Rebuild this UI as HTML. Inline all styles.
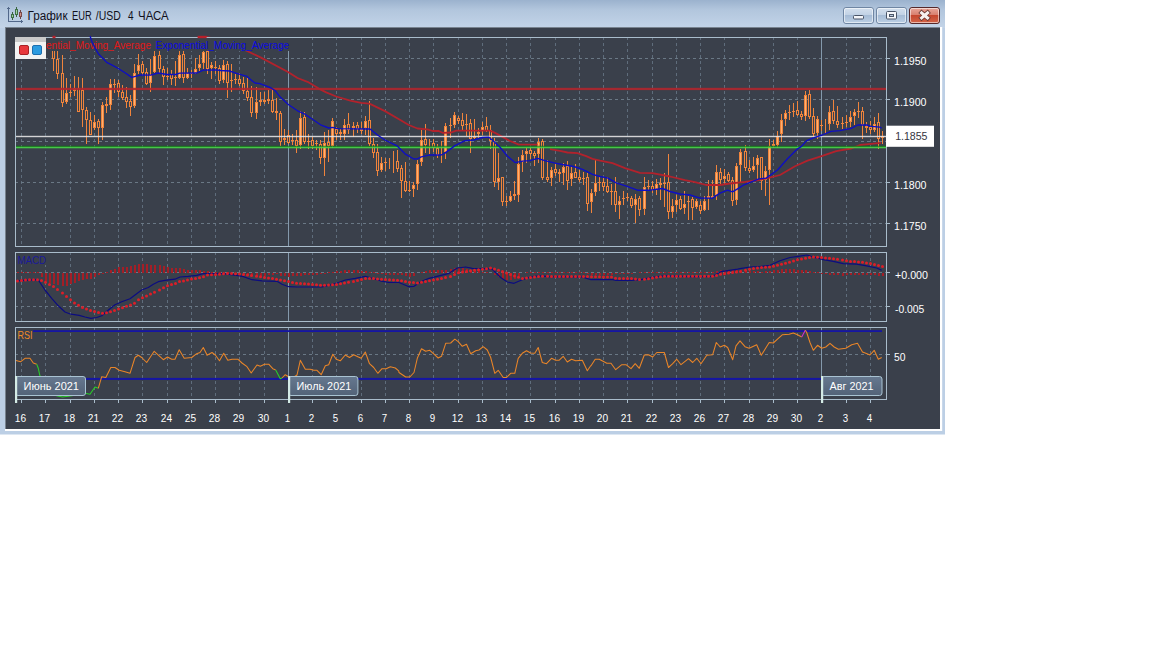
<!DOCTYPE html>
<html><head><meta charset="utf-8"><title>График EUR /USD 4 ЧАСА</title>
<style>html,body{margin:0;padding:0;background:#fff;width:1152px;height:648px;overflow:hidden}</style></head>
<body>
<svg width="1152" height="648" viewBox="0 0 1152 648" style="position:absolute;left:0;top:0;font-family:'Liberation Sans',sans-serif">
<defs>
<linearGradient id="tb" x1="0" y1="0" x2="0" y2="1"><stop offset="0" stop-color="#9bb2ce"/><stop offset="0.35" stop-color="#b2c6dd"/><stop offset="1" stop-color="#c3d4e8"/></linearGradient>
<linearGradient id="btn" x1="0" y1="0" x2="0" y2="1"><stop offset="0" stop-color="#d5e1ef"/><stop offset="0.45" stop-color="#c2d2e5"/><stop offset="0.5" stop-color="#a6bcd6"/><stop offset="1" stop-color="#bed1e6"/></linearGradient>
<linearGradient id="cls" x1="0" y1="0" x2="0" y2="1"><stop offset="0" stop-color="#e9a99d"/><stop offset="0.45" stop-color="#d9806f"/><stop offset="0.5" stop-color="#c5472f"/><stop offset="1" stop-color="#d4674a"/></linearGradient>
<linearGradient id="lab" x1="0" y1="0" x2="0" y2="1"><stop offset="0" stop-color="#66788f"/><stop offset="1" stop-color="#536378"/></linearGradient>
</defs>
<rect x="0" y="0" width="1152" height="648" fill="#ffffff"/>
<rect x="0" y="0" width="945" height="434.5" fill="#bccfe5"/>
<rect x="0" y="0" width="945" height="28" fill="url(#tb)"/>
<rect x="5" y="27" width="937.2" height="404" fill="#ffffff"/>
<rect x="5" y="27" width="935" height="402" fill="#78838f"/>
<rect x="6" y="28" width="934" height="401" fill="#3a404b"/>
<g shape-rendering="crispEdges" fill="#52688a"><rect x="8" y="7" width="1" height="15"/><rect x="8" y="21" width="15" height="1"/><rect x="7" y="8" width="3" height="1"/><rect x="21" y="20" width="1" height="3"/></g>
<g shape-rendering="crispEdges"><rect x="12" y="12" width="1" height="8" fill="#3a6540"/><rect x="11" y="14" width="3" height="4" fill="#3f7046"/><rect x="12" y="15" width="1" height="2" fill="#9fd0a0"/><rect x="16" y="7" width="1" height="10" fill="#3a6540"/><rect x="15" y="9" width="3" height="6" fill="#3f7046"/><rect x="16" y="10" width="1" height="4" fill="#9fd0a0"/><rect x="20" y="10" width="1" height="9" fill="#6a4444"/><rect x="19" y="12" width="3" height="5" fill="#7a4c4a"/><rect x="20" y="13" width="1" height="3" fill="#d09088"/></g>
<text x="27.5" y="19.7" font-size="12" fill="#10101c" text-anchor="start" textLength="40" lengthAdjust="spacingAndGlyphs" >График</text>
<text x="72" y="19.7" font-size="12" fill="#10101c" text-anchor="start" textLength="19.7" lengthAdjust="spacingAndGlyphs" >EUR</text>
<text x="95.8" y="19.7" font-size="12" fill="#10101c" text-anchor="start" textLength="25" lengthAdjust="spacingAndGlyphs" >/USD</text>
<text x="128" y="19.7" font-size="12" fill="#10101c" text-anchor="start" textLength="5.6" lengthAdjust="spacingAndGlyphs" >4</text>
<text x="138" y="19.7" font-size="12" fill="#10101c" text-anchor="start" textLength="30.7" lengthAdjust="spacingAndGlyphs" >ЧАСА</text>
<rect x="843.5" y="7.5" width="30" height="16" rx="2.5" fill="url(#btn)" stroke="#6f86a3" stroke-width="1"/><rect x="844.5" y="8.5" width="28" height="14" rx="1.5" fill="none" stroke="#ffffff" stroke-opacity="0.55" stroke-width="1"/>
<rect x="876.5" y="7.5" width="30" height="16" rx="2.5" fill="url(#btn)" stroke="#6f86a3" stroke-width="1"/><rect x="877.5" y="8.5" width="28" height="14" rx="1.5" fill="none" stroke="#ffffff" stroke-opacity="0.55" stroke-width="1"/>
<rect x="909.5" y="7.5" width="30" height="16" rx="2.5" fill="url(#cls)" stroke="#55282a" stroke-width="1"/><rect x="910.5" y="8.5" width="28" height="14" rx="1.5" fill="none" stroke="#ffffff" stroke-opacity="0.55" stroke-width="1"/>
<rect x="853.5" y="15.5" width="10" height="3.5" rx="1" fill="#f4f6fa" stroke="#4a5568" stroke-width="1"/>
<rect x="886.5" y="11.5" width="10" height="7.5" rx="1" fill="#f4f6fa" stroke="#4a5568" stroke-width="1"/><rect x="889.5" y="14.5" width="4" height="2" fill="#b9c8da" stroke="#4a5568" stroke-width="1"/>
<path d="M921.6 12.8 L927.6 18 M927.6 12.8 L921.6 18" stroke="#6a3a34" stroke-width="4.6" stroke-linecap="square" fill="none"/><path d="M921.6 12.8 L927.6 18 M927.6 12.8 L921.6 18" stroke="#f7f2f0" stroke-width="3" stroke-linecap="square" fill="none"/>
<g stroke="#5f6d7c" stroke-width="1" stroke-dasharray="3 3" shape-rendering="crispEdges" fill="none">
<path d="M21.5 37 V246"/>
<path d="M45.5 37 V246"/>
<path d="M70.5 37 V246"/>
<path d="M94.5 37 V246"/>
<path d="M118.5 37 V246"/>
<path d="M142.5 37 V246"/>
<path d="M167.5 37 V246"/>
<path d="M191.5 37 V246"/>
<path d="M215.5 37 V246"/>
<path d="M239.5 37 V246"/>
<path d="M264.5 37 V246"/>
<path d="M312.5 37 V246"/>
<path d="M336.5 37 V246"/>
<path d="M361.5 37 V246"/>
<path d="M385.5 37 V246"/>
<path d="M409.5 37 V246"/>
<path d="M433.5 37 V246"/>
<path d="M458.5 37 V246"/>
<path d="M482.5 37 V246"/>
<path d="M506.5 37 V246"/>
<path d="M530.5 37 V246"/>
<path d="M555.5 37 V246"/>
<path d="M579.5 37 V246"/>
<path d="M603.5 37 V246"/>
<path d="M627.5 37 V246"/>
<path d="M652.5 37 V246"/>
<path d="M676.5 37 V246"/>
<path d="M700.5 37 V246"/>
<path d="M724.5 37 V246"/>
<path d="M749.5 37 V246"/>
<path d="M773.5 37 V246"/>
<path d="M797.5 37 V246"/>
<path d="M846.5 37 V246"/>
<path d="M870.5 37 V246"/>
<path d="M21.5 252 V321"/>
<path d="M45.5 252 V321"/>
<path d="M70.5 252 V321"/>
<path d="M94.5 252 V321"/>
<path d="M118.5 252 V321"/>
<path d="M142.5 252 V321"/>
<path d="M167.5 252 V321"/>
<path d="M191.5 252 V321"/>
<path d="M215.5 252 V321"/>
<path d="M239.5 252 V321"/>
<path d="M264.5 252 V321"/>
<path d="M312.5 252 V321"/>
<path d="M336.5 252 V321"/>
<path d="M361.5 252 V321"/>
<path d="M385.5 252 V321"/>
<path d="M409.5 252 V321"/>
<path d="M433.5 252 V321"/>
<path d="M458.5 252 V321"/>
<path d="M482.5 252 V321"/>
<path d="M506.5 252 V321"/>
<path d="M530.5 252 V321"/>
<path d="M555.5 252 V321"/>
<path d="M579.5 252 V321"/>
<path d="M603.5 252 V321"/>
<path d="M627.5 252 V321"/>
<path d="M652.5 252 V321"/>
<path d="M676.5 252 V321"/>
<path d="M700.5 252 V321"/>
<path d="M724.5 252 V321"/>
<path d="M749.5 252 V321"/>
<path d="M773.5 252 V321"/>
<path d="M797.5 252 V321"/>
<path d="M846.5 252 V321"/>
<path d="M870.5 252 V321"/>
<path d="M21.5 327 V399"/>
<path d="M45.5 327 V399"/>
<path d="M70.5 327 V399"/>
<path d="M94.5 327 V399"/>
<path d="M118.5 327 V399"/>
<path d="M142.5 327 V399"/>
<path d="M167.5 327 V399"/>
<path d="M191.5 327 V399"/>
<path d="M215.5 327 V399"/>
<path d="M239.5 327 V399"/>
<path d="M264.5 327 V399"/>
<path d="M312.5 327 V399"/>
<path d="M336.5 327 V399"/>
<path d="M361.5 327 V399"/>
<path d="M385.5 327 V399"/>
<path d="M409.5 327 V399"/>
<path d="M433.5 327 V399"/>
<path d="M458.5 327 V399"/>
<path d="M482.5 327 V399"/>
<path d="M506.5 327 V399"/>
<path d="M530.5 327 V399"/>
<path d="M555.5 327 V399"/>
<path d="M579.5 327 V399"/>
<path d="M603.5 327 V399"/>
<path d="M627.5 327 V399"/>
<path d="M652.5 327 V399"/>
<path d="M676.5 327 V399"/>
<path d="M700.5 327 V399"/>
<path d="M724.5 327 V399"/>
<path d="M749.5 327 V399"/>
<path d="M773.5 327 V399"/>
<path d="M797.5 327 V399"/>
<path d="M846.5 327 V399"/>
<path d="M870.5 327 V399"/>
<path stroke="#6a7885" d="M15 58.5 H886"/>
<path stroke="#6a7885" d="M15 99.5 H886"/>
<path stroke="#6a7885" d="M15 141.5 H886"/>
<path stroke="#6a7885" d="M15 182.5 H886"/>
<path stroke="#6a7885" d="M15 223.5 H886"/>
<path stroke="#6a7885" d="M15 272.5 H886"/>
<path stroke="#6a7885" d="M15 306.5 H886"/>
<path stroke="#6a7885" d="M15 354.5 H886"/>
</g>
<g stroke="#8499ac" stroke-width="1" shape-rendering="crispEdges">
<path d="M288.5 37 V246"/>
<path d="M288.5 252 V321"/>
<path d="M288.5 327 V399"/>
<path d="M821.5 37 V246"/>
<path d="M821.5 252 V321"/>
<path d="M821.5 327 V399"/>
</g>
<g shape-rendering="crispEdges">
<rect x="53.0" y="45" width="1" height="26" fill="#f0843c"/>
<rect x="52.0" y="45" width="3" height="14" fill="#f0843c"/>
<rect x="53.0" y="46" width="1" height="12" fill="#3a404b"/>
<rect x="57.0" y="45" width="1" height="34" fill="#f0843c"/>
<rect x="56.0" y="59" width="3" height="15" fill="#f0843c"/>
<rect x="57.0" y="60" width="1" height="13" fill="#3a404b"/>
<rect x="62.0" y="55" width="1" height="52" fill="#f0843c"/>
<rect x="61.0" y="73" width="3" height="30" fill="#f0843c"/>
<rect x="62.0" y="74" width="1" height="28" fill="#3a404b"/>
<rect x="66.0" y="78" width="1" height="26" fill="#f0843c"/>
<rect x="65.0" y="93" width="3" height="9" fill="#f0843c"/>
<rect x="66.0" y="94" width="1" height="7" fill="#ffb070"/>
<rect x="70.0" y="84" width="1" height="13" fill="#f0843c"/>
<rect x="69.0" y="92" width="3" height="1" fill="#f0843c"/>
<rect x="74.0" y="76" width="1" height="20" fill="#f0843c"/>
<rect x="73.0" y="88" width="3" height="3" fill="#f0843c"/>
<rect x="74.0" y="89" width="1" height="1" fill="#ffb070"/>
<rect x="78.0" y="77" width="1" height="35" fill="#f0843c"/>
<rect x="77.0" y="88" width="3" height="24" fill="#f0843c"/>
<rect x="78.0" y="89" width="1" height="22" fill="#3a404b"/>
<rect x="82.0" y="78" width="1" height="49" fill="#f0843c"/>
<rect x="81.0" y="90" width="3" height="20" fill="#f0843c"/>
<rect x="82.0" y="91" width="1" height="18" fill="#3a404b"/>
<rect x="86.0" y="107" width="1" height="37" fill="#f0843c"/>
<rect x="85.0" y="110" width="3" height="10" fill="#f0843c"/>
<rect x="86.0" y="111" width="1" height="8" fill="#3a404b"/>
<rect x="90.0" y="112" width="1" height="23" fill="#f0843c"/>
<rect x="89.0" y="120" width="3" height="15" fill="#f0843c"/>
<rect x="90.0" y="121" width="1" height="13" fill="#3a404b"/>
<rect x="94.0" y="115" width="1" height="15" fill="#f0843c"/>
<rect x="93.0" y="122" width="3" height="6" fill="#f0843c"/>
<rect x="94.0" y="123" width="1" height="4" fill="#ffb070"/>
<rect x="98.0" y="119" width="1" height="25" fill="#f0843c"/>
<rect x="97.0" y="121" width="3" height="7" fill="#f0843c"/>
<rect x="98.0" y="122" width="1" height="5" fill="#3a404b"/>
<rect x="102.0" y="102" width="1" height="38" fill="#f0843c"/>
<rect x="101.0" y="105" width="3" height="23" fill="#f0843c"/>
<rect x="102.0" y="106" width="1" height="21" fill="#ffb070"/>
<rect x="106.0" y="97" width="1" height="16" fill="#f0843c"/>
<rect x="105.0" y="104" width="3" height="2" fill="#f0843c"/>
<rect x="110.0" y="79" width="1" height="31" fill="#f0843c"/>
<rect x="109.0" y="84" width="3" height="21" fill="#f0843c"/>
<rect x="110.0" y="85" width="1" height="19" fill="#ffb070"/>
<rect x="114.0" y="79" width="1" height="14" fill="#f0843c"/>
<rect x="113.0" y="84" width="3" height="1" fill="#f0843c"/>
<rect x="118.0" y="80" width="1" height="17" fill="#f0843c"/>
<rect x="117.0" y="83" width="3" height="9" fill="#f0843c"/>
<rect x="118.0" y="84" width="1" height="7" fill="#3a404b"/>
<rect x="122.0" y="85" width="1" height="15" fill="#f0843c"/>
<rect x="121.0" y="92" width="3" height="6" fill="#f0843c"/>
<rect x="122.0" y="93" width="1" height="4" fill="#3a404b"/>
<rect x="126.0" y="87" width="1" height="21" fill="#f0843c"/>
<rect x="125.0" y="97" width="3" height="5" fill="#f0843c"/>
<rect x="126.0" y="98" width="1" height="3" fill="#3a404b"/>
<rect x="130.0" y="95" width="1" height="21" fill="#f0843c"/>
<rect x="129.0" y="101" width="3" height="6" fill="#f0843c"/>
<rect x="130.0" y="102" width="1" height="4" fill="#3a404b"/>
<rect x="134.0" y="64" width="1" height="44" fill="#f0843c"/>
<rect x="133.0" y="73" width="3" height="33" fill="#f0843c"/>
<rect x="134.0" y="74" width="1" height="31" fill="#ffb070"/>
<rect x="138.0" y="54" width="1" height="20" fill="#f0843c"/>
<rect x="137.0" y="65" width="3" height="6" fill="#f0843c"/>
<rect x="138.0" y="66" width="1" height="4" fill="#ffb070"/>
<rect x="142.0" y="61" width="1" height="14" fill="#f0843c"/>
<rect x="141.0" y="64" width="3" height="9" fill="#f0843c"/>
<rect x="142.0" y="65" width="1" height="7" fill="#3a404b"/>
<rect x="146.0" y="68" width="1" height="17" fill="#f0843c"/>
<rect x="145.0" y="72" width="3" height="12" fill="#f0843c"/>
<rect x="146.0" y="73" width="1" height="10" fill="#3a404b"/>
<rect x="150.0" y="59" width="1" height="33" fill="#f0843c"/>
<rect x="149.0" y="75" width="3" height="8" fill="#f0843c"/>
<rect x="150.0" y="76" width="1" height="6" fill="#ffb070"/>
<rect x="154.0" y="45" width="1" height="28" fill="#f0843c"/>
<rect x="153.0" y="56" width="3" height="16" fill="#f0843c"/>
<rect x="154.0" y="57" width="1" height="14" fill="#ffb070"/>
<rect x="159.0" y="45" width="1" height="28" fill="#f0843c"/>
<rect x="158.0" y="55" width="3" height="14" fill="#f0843c"/>
<rect x="159.0" y="56" width="1" height="12" fill="#3a404b"/>
<rect x="163.0" y="66" width="1" height="19" fill="#f0843c"/>
<rect x="162.0" y="69" width="3" height="8" fill="#f0843c"/>
<rect x="163.0" y="70" width="1" height="6" fill="#3a404b"/>
<rect x="167.0" y="68" width="1" height="12" fill="#f0843c"/>
<rect x="166.0" y="76" width="3" height="1" fill="#f0843c"/>
<rect x="171.0" y="70" width="1" height="15" fill="#f0843c"/>
<rect x="170.0" y="74" width="3" height="5" fill="#f0843c"/>
<rect x="171.0" y="75" width="1" height="3" fill="#3a404b"/>
<rect x="175.0" y="61" width="1" height="25" fill="#f0843c"/>
<rect x="174.0" y="77" width="3" height="1" fill="#f0843c"/>
<rect x="179.0" y="45" width="1" height="34" fill="#f0843c"/>
<rect x="178.0" y="55" width="3" height="23" fill="#f0843c"/>
<rect x="179.0" y="56" width="1" height="21" fill="#ffb070"/>
<rect x="183.0" y="45" width="1" height="38" fill="#f0843c"/>
<rect x="182.0" y="54" width="3" height="24" fill="#f0843c"/>
<rect x="183.0" y="55" width="1" height="22" fill="#3a404b"/>
<rect x="187.0" y="68" width="1" height="11" fill="#f0843c"/>
<rect x="186.0" y="73" width="3" height="5" fill="#f0843c"/>
<rect x="187.0" y="74" width="1" height="3" fill="#ffb070"/>
<rect x="191.0" y="70" width="1" height="8" fill="#f0843c"/>
<rect x="190.0" y="73" width="3" height="1" fill="#f0843c"/>
<rect x="195.0" y="58" width="1" height="16" fill="#f0843c"/>
<rect x="194.0" y="69" width="3" height="4" fill="#f0843c"/>
<rect x="195.0" y="70" width="1" height="2" fill="#ffb070"/>
<rect x="199.0" y="55" width="1" height="16" fill="#f0843c"/>
<rect x="198.0" y="64" width="3" height="4" fill="#f0843c"/>
<rect x="199.0" y="65" width="1" height="2" fill="#ffb070"/>
<rect x="203.0" y="45" width="1" height="24" fill="#f0843c"/>
<rect x="202.0" y="52" width="3" height="11" fill="#f0843c"/>
<rect x="203.0" y="53" width="1" height="9" fill="#ffb070"/>
<rect x="207.0" y="45" width="1" height="29" fill="#f0843c"/>
<rect x="206.0" y="51" width="3" height="18" fill="#f0843c"/>
<rect x="207.0" y="52" width="1" height="16" fill="#3a404b"/>
<rect x="211.0" y="62" width="1" height="17" fill="#f0843c"/>
<rect x="210.0" y="65" width="3" height="3" fill="#f0843c"/>
<rect x="211.0" y="66" width="1" height="1" fill="#ffb070"/>
<rect x="215.0" y="61" width="1" height="13" fill="#f0843c"/>
<rect x="214.0" y="67" width="3" height="1" fill="#f0843c"/>
<rect x="219.0" y="65" width="1" height="19" fill="#f0843c"/>
<rect x="218.0" y="68" width="3" height="13" fill="#f0843c"/>
<rect x="219.0" y="69" width="1" height="11" fill="#3a404b"/>
<rect x="223.0" y="60" width="1" height="23" fill="#f0843c"/>
<rect x="222.0" y="65" width="3" height="15" fill="#f0843c"/>
<rect x="223.0" y="66" width="1" height="13" fill="#ffb070"/>
<rect x="227.0" y="61" width="1" height="37" fill="#f0843c"/>
<rect x="226.0" y="64" width="3" height="19" fill="#f0843c"/>
<rect x="227.0" y="65" width="1" height="17" fill="#3a404b"/>
<rect x="231.0" y="64" width="1" height="28" fill="#f0843c"/>
<rect x="230.0" y="80" width="3" height="1" fill="#f0843c"/>
<rect x="235.0" y="74" width="1" height="10" fill="#f0843c"/>
<rect x="234.0" y="79" width="3" height="1" fill="#f0843c"/>
<rect x="239.0" y="73" width="1" height="13" fill="#f0843c"/>
<rect x="238.0" y="79" width="3" height="5" fill="#f0843c"/>
<rect x="239.0" y="80" width="1" height="3" fill="#3a404b"/>
<rect x="243.0" y="77" width="1" height="17" fill="#f0843c"/>
<rect x="242.0" y="83" width="3" height="8" fill="#f0843c"/>
<rect x="243.0" y="84" width="1" height="6" fill="#3a404b"/>
<rect x="247.0" y="78" width="1" height="23" fill="#f0843c"/>
<rect x="246.0" y="91" width="3" height="7" fill="#f0843c"/>
<rect x="247.0" y="92" width="1" height="5" fill="#3a404b"/>
<rect x="251.0" y="86" width="1" height="31" fill="#f0843c"/>
<rect x="250.0" y="97" width="3" height="16" fill="#f0843c"/>
<rect x="251.0" y="98" width="1" height="14" fill="#3a404b"/>
<rect x="256.0" y="87" width="1" height="32" fill="#f0843c"/>
<rect x="255.0" y="102" width="3" height="11" fill="#f0843c"/>
<rect x="256.0" y="103" width="1" height="9" fill="#ffb070"/>
<rect x="260.0" y="92" width="1" height="14" fill="#f0843c"/>
<rect x="259.0" y="100" width="3" height="2" fill="#f0843c"/>
<rect x="264.0" y="92" width="1" height="12" fill="#f0843c"/>
<rect x="263.0" y="100" width="3" height="2" fill="#f0843c"/>
<rect x="268.0" y="90" width="1" height="14" fill="#f0843c"/>
<rect x="267.0" y="99" width="3" height="2" fill="#f0843c"/>
<rect x="272.0" y="90" width="1" height="23" fill="#f0843c"/>
<rect x="271.0" y="100" width="3" height="12" fill="#f0843c"/>
<rect x="272.0" y="101" width="1" height="10" fill="#3a404b"/>
<rect x="276.0" y="98" width="1" height="22" fill="#f0843c"/>
<rect x="275.0" y="111" width="3" height="2" fill="#f0843c"/>
<rect x="280.0" y="111" width="1" height="35" fill="#f0843c"/>
<rect x="279.0" y="113" width="3" height="29" fill="#f0843c"/>
<rect x="280.0" y="114" width="1" height="27" fill="#3a404b"/>
<rect x="284.0" y="129" width="1" height="16" fill="#f0843c"/>
<rect x="283.0" y="138" width="3" height="2" fill="#f0843c"/>
<rect x="288.0" y="130" width="1" height="14" fill="#f0843c"/>
<rect x="287.0" y="135" width="3" height="8" fill="#f0843c"/>
<rect x="288.0" y="136" width="1" height="6" fill="#3a404b"/>
<rect x="292.0" y="134" width="1" height="11" fill="#f0843c"/>
<rect x="291.0" y="140" width="3" height="1" fill="#f0843c"/>
<rect x="296.0" y="130" width="1" height="23" fill="#f0843c"/>
<rect x="295.0" y="140" width="3" height="6" fill="#f0843c"/>
<rect x="296.0" y="141" width="1" height="4" fill="#3a404b"/>
<rect x="300.0" y="111" width="1" height="38" fill="#f0843c"/>
<rect x="299.0" y="118" width="3" height="27" fill="#f0843c"/>
<rect x="300.0" y="119" width="1" height="25" fill="#ffb070"/>
<rect x="304.0" y="112" width="1" height="32" fill="#f0843c"/>
<rect x="303.0" y="117" width="3" height="25" fill="#f0843c"/>
<rect x="304.0" y="118" width="1" height="23" fill="#3a404b"/>
<rect x="308.0" y="134" width="1" height="15" fill="#f0843c"/>
<rect x="307.0" y="141" width="3" height="1" fill="#f0843c"/>
<rect x="312.0" y="137" width="1" height="12" fill="#f0843c"/>
<rect x="311.0" y="140" width="3" height="6" fill="#f0843c"/>
<rect x="312.0" y="141" width="1" height="4" fill="#3a404b"/>
<rect x="316.0" y="140" width="1" height="10" fill="#f0843c"/>
<rect x="315.0" y="143" width="3" height="1" fill="#f0843c"/>
<rect x="320.0" y="140" width="1" height="24" fill="#f0843c"/>
<rect x="319.0" y="144" width="3" height="14" fill="#f0843c"/>
<rect x="320.0" y="145" width="1" height="12" fill="#3a404b"/>
<rect x="324.0" y="132" width="1" height="44" fill="#f0843c"/>
<rect x="323.0" y="143" width="3" height="15" fill="#f0843c"/>
<rect x="324.0" y="144" width="1" height="13" fill="#ffb070"/>
<rect x="328.0" y="130" width="1" height="32" fill="#f0843c"/>
<rect x="327.0" y="142" width="3" height="4" fill="#f0843c"/>
<rect x="328.0" y="143" width="1" height="2" fill="#3a404b"/>
<rect x="332.0" y="118" width="1" height="30" fill="#f0843c"/>
<rect x="331.0" y="121" width="3" height="25" fill="#f0843c"/>
<rect x="332.0" y="122" width="1" height="23" fill="#ffb070"/>
<rect x="336.0" y="127" width="1" height="13" fill="#f0843c"/>
<rect x="335.0" y="129" width="3" height="5" fill="#f0843c"/>
<rect x="336.0" y="130" width="1" height="3" fill="#3a404b"/>
<rect x="340.0" y="129" width="1" height="11" fill="#f0843c"/>
<rect x="339.0" y="132" width="3" height="2" fill="#f0843c"/>
<rect x="344.0" y="119" width="1" height="21" fill="#f0843c"/>
<rect x="343.0" y="125" width="3" height="9" fill="#f0843c"/>
<rect x="344.0" y="126" width="1" height="7" fill="#ffb070"/>
<rect x="348.0" y="113" width="1" height="21" fill="#f0843c"/>
<rect x="347.0" y="124" width="3" height="6" fill="#f0843c"/>
<rect x="348.0" y="125" width="1" height="4" fill="#3a404b"/>
<rect x="353.0" y="122" width="1" height="15" fill="#f0843c"/>
<rect x="352.0" y="126" width="3" height="2" fill="#f0843c"/>
<rect x="357.0" y="122" width="1" height="11" fill="#f0843c"/>
<rect x="356.0" y="125" width="3" height="4" fill="#f0843c"/>
<rect x="357.0" y="126" width="1" height="2" fill="#3a404b"/>
<rect x="361.0" y="122" width="1" height="12" fill="#f0843c"/>
<rect x="360.0" y="129" width="3" height="2" fill="#f0843c"/>
<rect x="365.0" y="116" width="1" height="19" fill="#f0843c"/>
<rect x="364.0" y="121" width="3" height="7" fill="#f0843c"/>
<rect x="365.0" y="122" width="1" height="5" fill="#ffb070"/>
<rect x="369.0" y="101" width="1" height="45" fill="#f0843c"/>
<rect x="368.0" y="120" width="3" height="24" fill="#f0843c"/>
<rect x="369.0" y="121" width="1" height="22" fill="#3a404b"/>
<rect x="373.0" y="138" width="1" height="20" fill="#f0843c"/>
<rect x="372.0" y="144" width="3" height="9" fill="#f0843c"/>
<rect x="373.0" y="145" width="1" height="7" fill="#3a404b"/>
<rect x="377.0" y="144" width="1" height="32" fill="#f0843c"/>
<rect x="376.0" y="152" width="3" height="19" fill="#f0843c"/>
<rect x="377.0" y="153" width="1" height="17" fill="#3a404b"/>
<rect x="381.0" y="157" width="1" height="15" fill="#f0843c"/>
<rect x="380.0" y="163" width="3" height="7" fill="#f0843c"/>
<rect x="381.0" y="164" width="1" height="5" fill="#ffb070"/>
<rect x="385.0" y="158" width="1" height="13" fill="#f0843c"/>
<rect x="384.0" y="162" width="3" height="1" fill="#f0843c"/>
<rect x="389.0" y="158" width="1" height="11" fill="#f0843c"/>
<rect x="393.0" y="151" width="1" height="22" fill="#f0843c"/>
<rect x="397.0" y="150" width="1" height="22" fill="#f0843c"/>
<rect x="396.0" y="161" width="3" height="8" fill="#f0843c"/>
<rect x="397.0" y="162" width="1" height="6" fill="#3a404b"/>
<rect x="401.0" y="165" width="1" height="33" fill="#f0843c"/>
<rect x="400.0" y="168" width="3" height="13" fill="#f0843c"/>
<rect x="401.0" y="169" width="1" height="11" fill="#3a404b"/>
<rect x="405.0" y="162" width="1" height="30" fill="#f0843c"/>
<rect x="404.0" y="181" width="3" height="10" fill="#f0843c"/>
<rect x="405.0" y="182" width="1" height="8" fill="#3a404b"/>
<rect x="409.0" y="181" width="1" height="11" fill="#f0843c"/>
<rect x="408.0" y="190" width="3" height="1" fill="#f0843c"/>
<rect x="413.0" y="182" width="1" height="15" fill="#f0843c"/>
<rect x="412.0" y="185" width="3" height="4" fill="#f0843c"/>
<rect x="413.0" y="186" width="1" height="2" fill="#ffb070"/>
<rect x="417.0" y="160" width="1" height="30" fill="#f0843c"/>
<rect x="416.0" y="164" width="3" height="20" fill="#f0843c"/>
<rect x="417.0" y="165" width="1" height="18" fill="#ffb070"/>
<rect x="421.0" y="130" width="1" height="36" fill="#f0843c"/>
<rect x="420.0" y="140" width="3" height="22" fill="#f0843c"/>
<rect x="421.0" y="141" width="1" height="20" fill="#ffb070"/>
<rect x="425.0" y="124" width="1" height="29" fill="#f0843c"/>
<rect x="424.0" y="139" width="3" height="6" fill="#f0843c"/>
<rect x="425.0" y="140" width="1" height="4" fill="#3a404b"/>
<rect x="429.0" y="139" width="1" height="15" fill="#f0843c"/>
<rect x="433.0" y="139" width="1" height="13" fill="#f0843c"/>
<rect x="432.0" y="143" width="3" height="5" fill="#f0843c"/>
<rect x="433.0" y="144" width="1" height="3" fill="#3a404b"/>
<rect x="437.0" y="144" width="1" height="14" fill="#f0843c"/>
<rect x="436.0" y="148" width="3" height="7" fill="#f0843c"/>
<rect x="437.0" y="149" width="1" height="5" fill="#3a404b"/>
<rect x="441.0" y="141" width="1" height="22" fill="#f0843c"/>
<rect x="445.0" y="123" width="1" height="36" fill="#f0843c"/>
<rect x="444.0" y="126" width="3" height="26" fill="#f0843c"/>
<rect x="445.0" y="127" width="1" height="24" fill="#ffb070"/>
<rect x="450.0" y="118" width="1" height="20" fill="#f0843c"/>
<rect x="449.0" y="125" width="3" height="1" fill="#f0843c"/>
<rect x="454.0" y="112" width="1" height="16" fill="#f0843c"/>
<rect x="453.0" y="115" width="3" height="10" fill="#f0843c"/>
<rect x="454.0" y="116" width="1" height="8" fill="#ffb070"/>
<rect x="458.0" y="116" width="1" height="8" fill="#f0843c"/>
<rect x="457.0" y="118" width="3" height="3" fill="#f0843c"/>
<rect x="458.0" y="119" width="1" height="1" fill="#3a404b"/>
<rect x="462.0" y="113" width="1" height="17" fill="#f0843c"/>
<rect x="461.0" y="120" width="3" height="6" fill="#f0843c"/>
<rect x="462.0" y="121" width="1" height="4" fill="#3a404b"/>
<rect x="466.0" y="114" width="1" height="22" fill="#f0843c"/>
<rect x="465.0" y="124" width="3" height="1" fill="#f0843c"/>
<rect x="470.0" y="119" width="1" height="34" fill="#f0843c"/>
<rect x="469.0" y="123" width="3" height="16" fill="#f0843c"/>
<rect x="470.0" y="124" width="1" height="14" fill="#3a404b"/>
<rect x="474.0" y="119" width="1" height="20" fill="#f0843c"/>
<rect x="473.0" y="136" width="3" height="2" fill="#f0843c"/>
<rect x="478.0" y="128" width="1" height="10" fill="#f0843c"/>
<rect x="477.0" y="132" width="3" height="2" fill="#f0843c"/>
<rect x="482.0" y="122" width="1" height="13" fill="#f0843c"/>
<rect x="481.0" y="127" width="3" height="4" fill="#f0843c"/>
<rect x="482.0" y="128" width="1" height="2" fill="#ffb070"/>
<rect x="486.0" y="117" width="1" height="15" fill="#f0843c"/>
<rect x="485.0" y="126" width="3" height="5" fill="#f0843c"/>
<rect x="486.0" y="127" width="1" height="3" fill="#3a404b"/>
<rect x="490.0" y="125" width="1" height="24" fill="#f0843c"/>
<rect x="489.0" y="130" width="3" height="11" fill="#f0843c"/>
<rect x="490.0" y="131" width="1" height="9" fill="#3a404b"/>
<rect x="494.0" y="138" width="1" height="49" fill="#f0843c"/>
<rect x="493.0" y="142" width="3" height="40" fill="#f0843c"/>
<rect x="494.0" y="143" width="1" height="38" fill="#3a404b"/>
<rect x="498.0" y="153" width="1" height="37" fill="#f0843c"/>
<rect x="497.0" y="178" width="3" height="4" fill="#f0843c"/>
<rect x="498.0" y="179" width="1" height="2" fill="#ffb070"/>
<rect x="502.0" y="177" width="1" height="29" fill="#f0843c"/>
<rect x="501.0" y="177" width="3" height="25" fill="#f0843c"/>
<rect x="502.0" y="178" width="1" height="23" fill="#3a404b"/>
<rect x="506.0" y="196" width="1" height="10" fill="#f0843c"/>
<rect x="505.0" y="201" width="3" height="1" fill="#f0843c"/>
<rect x="510.0" y="191" width="1" height="11" fill="#f0843c"/>
<rect x="509.0" y="196" width="3" height="5" fill="#f0843c"/>
<rect x="510.0" y="197" width="1" height="3" fill="#ffb070"/>
<rect x="514.0" y="181" width="1" height="19" fill="#f0843c"/>
<rect x="513.0" y="194" width="3" height="2" fill="#f0843c"/>
<rect x="518.0" y="157" width="1" height="45" fill="#f0843c"/>
<rect x="517.0" y="164" width="3" height="31" fill="#f0843c"/>
<rect x="518.0" y="165" width="1" height="29" fill="#ffb070"/>
<rect x="522.0" y="150" width="1" height="22" fill="#f0843c"/>
<rect x="521.0" y="155" width="3" height="7" fill="#f0843c"/>
<rect x="522.0" y="156" width="1" height="5" fill="#ffb070"/>
<rect x="526.0" y="148" width="1" height="15" fill="#f0843c"/>
<rect x="525.0" y="151" width="3" height="3" fill="#f0843c"/>
<rect x="526.0" y="152" width="1" height="1" fill="#ffb070"/>
<rect x="530.0" y="148" width="1" height="11" fill="#f0843c"/>
<rect x="529.0" y="150" width="3" height="4" fill="#f0843c"/>
<rect x="530.0" y="151" width="1" height="2" fill="#3a404b"/>
<rect x="534.0" y="151" width="1" height="15" fill="#f0843c"/>
<rect x="533.0" y="153" width="3" height="3" fill="#f0843c"/>
<rect x="534.0" y="154" width="1" height="1" fill="#3a404b"/>
<rect x="538.0" y="138" width="1" height="25" fill="#f0843c"/>
<rect x="537.0" y="142" width="3" height="12" fill="#f0843c"/>
<rect x="538.0" y="143" width="1" height="10" fill="#ffb070"/>
<rect x="542.0" y="139" width="1" height="41" fill="#f0843c"/>
<rect x="541.0" y="141" width="3" height="37" fill="#f0843c"/>
<rect x="542.0" y="142" width="1" height="35" fill="#3a404b"/>
<rect x="547.0" y="160" width="1" height="22" fill="#f0843c"/>
<rect x="546.0" y="177" width="3" height="3" fill="#f0843c"/>
<rect x="547.0" y="178" width="1" height="1" fill="#3a404b"/>
<rect x="551.0" y="167" width="1" height="19" fill="#f0843c"/>
<rect x="550.0" y="170" width="3" height="8" fill="#f0843c"/>
<rect x="551.0" y="171" width="1" height="6" fill="#ffb070"/>
<rect x="555.0" y="164" width="1" height="12" fill="#f0843c"/>
<rect x="554.0" y="169" width="3" height="4" fill="#f0843c"/>
<rect x="555.0" y="170" width="1" height="2" fill="#3a404b"/>
<rect x="559.0" y="169" width="1" height="13" fill="#f0843c"/>
<rect x="558.0" y="172" width="3" height="2" fill="#f0843c"/>
<rect x="563.0" y="163" width="1" height="22" fill="#f0843c"/>
<rect x="562.0" y="167" width="3" height="6" fill="#f0843c"/>
<rect x="563.0" y="168" width="1" height="4" fill="#ffb070"/>
<rect x="567.0" y="161" width="1" height="29" fill="#f0843c"/>
<rect x="566.0" y="166" width="3" height="15" fill="#f0843c"/>
<rect x="567.0" y="167" width="1" height="13" fill="#3a404b"/>
<rect x="571.0" y="167" width="1" height="19" fill="#f0843c"/>
<rect x="570.0" y="173" width="3" height="6" fill="#f0843c"/>
<rect x="571.0" y="174" width="1" height="4" fill="#ffb070"/>
<rect x="575.0" y="164" width="1" height="14" fill="#f0843c"/>
<rect x="574.0" y="172" width="3" height="6" fill="#f0843c"/>
<rect x="575.0" y="173" width="1" height="4" fill="#3a404b"/>
<rect x="579.0" y="170" width="1" height="12" fill="#f0843c"/>
<rect x="578.0" y="177" width="3" height="3" fill="#f0843c"/>
<rect x="579.0" y="178" width="1" height="1" fill="#3a404b"/>
<rect x="583.0" y="172" width="1" height="13" fill="#f0843c"/>
<rect x="582.0" y="178" width="3" height="1" fill="#f0843c"/>
<rect x="587.0" y="173" width="1" height="38" fill="#f0843c"/>
<rect x="586.0" y="177" width="3" height="27" fill="#f0843c"/>
<rect x="587.0" y="178" width="1" height="25" fill="#3a404b"/>
<rect x="591.0" y="189" width="1" height="24" fill="#f0843c"/>
<rect x="590.0" y="193" width="3" height="9" fill="#f0843c"/>
<rect x="591.0" y="194" width="1" height="7" fill="#ffb070"/>
<rect x="595.0" y="160" width="1" height="36" fill="#f0843c"/>
<rect x="594.0" y="183" width="3" height="9" fill="#f0843c"/>
<rect x="595.0" y="184" width="1" height="7" fill="#ffb070"/>
<rect x="599.0" y="177" width="1" height="14" fill="#f0843c"/>
<rect x="598.0" y="182" width="3" height="1" fill="#f0843c"/>
<rect x="603.0" y="178" width="1" height="13" fill="#f0843c"/>
<rect x="602.0" y="182" width="3" height="5" fill="#f0843c"/>
<rect x="603.0" y="183" width="1" height="3" fill="#3a404b"/>
<rect x="607.0" y="177" width="1" height="16" fill="#f0843c"/>
<rect x="606.0" y="186" width="3" height="6" fill="#f0843c"/>
<rect x="607.0" y="187" width="1" height="4" fill="#3a404b"/>
<rect x="611.0" y="184" width="1" height="21" fill="#f0843c"/>
<rect x="610.0" y="191" width="3" height="1" fill="#f0843c"/>
<rect x="615.0" y="177" width="1" height="35" fill="#f0843c"/>
<rect x="614.0" y="191" width="3" height="14" fill="#f0843c"/>
<rect x="615.0" y="192" width="1" height="12" fill="#3a404b"/>
<rect x="619.0" y="196" width="1" height="23" fill="#f0843c"/>
<rect x="618.0" y="201" width="3" height="4" fill="#f0843c"/>
<rect x="619.0" y="202" width="1" height="2" fill="#ffb070"/>
<rect x="623.0" y="191" width="1" height="14" fill="#f0843c"/>
<rect x="622.0" y="198" width="3" height="1" fill="#f0843c"/>
<rect x="627.0" y="193" width="1" height="8" fill="#f0843c"/>
<rect x="626.0" y="197" width="3" height="1" fill="#f0843c"/>
<rect x="631.0" y="196" width="1" height="12" fill="#f0843c"/>
<rect x="630.0" y="198" width="3" height="8" fill="#f0843c"/>
<rect x="631.0" y="199" width="1" height="6" fill="#3a404b"/>
<rect x="635.0" y="194" width="1" height="29" fill="#f0843c"/>
<rect x="634.0" y="199" width="3" height="6" fill="#f0843c"/>
<rect x="635.0" y="200" width="1" height="4" fill="#ffb070"/>
<rect x="639.0" y="196" width="1" height="20" fill="#f0843c"/>
<rect x="638.0" y="198" width="3" height="12" fill="#f0843c"/>
<rect x="639.0" y="199" width="1" height="10" fill="#3a404b"/>
<rect x="644.0" y="177" width="1" height="38" fill="#f0843c"/>
<rect x="643.0" y="187" width="3" height="22" fill="#f0843c"/>
<rect x="644.0" y="188" width="1" height="20" fill="#ffb070"/>
<rect x="648.0" y="180" width="1" height="10" fill="#f0843c"/>
<rect x="647.0" y="186" width="3" height="1" fill="#f0843c"/>
<rect x="652.0" y="181" width="1" height="12" fill="#f0843c"/>
<rect x="651.0" y="186" width="3" height="4" fill="#f0843c"/>
<rect x="652.0" y="187" width="1" height="2" fill="#3a404b"/>
<rect x="656.0" y="179" width="1" height="16" fill="#f0843c"/>
<rect x="655.0" y="184" width="3" height="5" fill="#f0843c"/>
<rect x="656.0" y="185" width="1" height="3" fill="#ffb070"/>
<rect x="660.0" y="178" width="1" height="22" fill="#f0843c"/>
<rect x="659.0" y="183" width="3" height="2" fill="#f0843c"/>
<rect x="664.0" y="173" width="1" height="34" fill="#f0843c"/>
<rect x="663.0" y="183" width="3" height="1" fill="#f0843c"/>
<rect x="668.0" y="154" width="1" height="65" fill="#f0843c"/>
<rect x="667.0" y="182" width="3" height="30" fill="#f0843c"/>
<rect x="668.0" y="183" width="1" height="28" fill="#3a404b"/>
<rect x="672.0" y="199" width="1" height="19" fill="#f0843c"/>
<rect x="671.0" y="206" width="3" height="6" fill="#f0843c"/>
<rect x="672.0" y="207" width="1" height="4" fill="#ffb070"/>
<rect x="676.0" y="195" width="1" height="17" fill="#f0843c"/>
<rect x="675.0" y="200" width="3" height="5" fill="#f0843c"/>
<rect x="676.0" y="201" width="1" height="3" fill="#ffb070"/>
<rect x="680.0" y="196" width="1" height="14" fill="#f0843c"/>
<rect x="679.0" y="199" width="3" height="10" fill="#f0843c"/>
<rect x="680.0" y="200" width="1" height="8" fill="#3a404b"/>
<rect x="684.0" y="191" width="1" height="23" fill="#f0843c"/>
<rect x="683.0" y="204" width="3" height="4" fill="#f0843c"/>
<rect x="684.0" y="205" width="1" height="2" fill="#ffb070"/>
<rect x="688.0" y="196" width="1" height="24" fill="#f0843c"/>
<rect x="687.0" y="201" width="3" height="1" fill="#f0843c"/>
<rect x="692.0" y="197" width="1" height="23" fill="#f0843c"/>
<rect x="691.0" y="199" width="3" height="9" fill="#f0843c"/>
<rect x="692.0" y="200" width="1" height="7" fill="#3a404b"/>
<rect x="696.0" y="199" width="1" height="10" fill="#f0843c"/>
<rect x="695.0" y="201" width="3" height="6" fill="#f0843c"/>
<rect x="696.0" y="202" width="1" height="4" fill="#ffb070"/>
<rect x="700.0" y="201" width="1" height="13" fill="#f0843c"/>
<rect x="699.0" y="205" width="3" height="6" fill="#f0843c"/>
<rect x="700.0" y="206" width="1" height="4" fill="#3a404b"/>
<rect x="704.0" y="196" width="1" height="15" fill="#f0843c"/>
<rect x="703.0" y="201" width="3" height="9" fill="#f0843c"/>
<rect x="704.0" y="202" width="1" height="7" fill="#ffb070"/>
<rect x="708.0" y="180" width="1" height="30" fill="#f0843c"/>
<rect x="707.0" y="196" width="3" height="2" fill="#f0843c"/>
<rect x="712.0" y="180" width="1" height="18" fill="#f0843c"/>
<rect x="711.0" y="196" width="3" height="2" fill="#f0843c"/>
<rect x="716.0" y="165" width="1" height="35" fill="#f0843c"/>
<rect x="715.0" y="172" width="3" height="23" fill="#f0843c"/>
<rect x="716.0" y="173" width="1" height="21" fill="#ffb070"/>
<rect x="720.0" y="168" width="1" height="16" fill="#f0843c"/>
<rect x="719.0" y="172" width="3" height="8" fill="#f0843c"/>
<rect x="720.0" y="173" width="1" height="6" fill="#3a404b"/>
<rect x="724.0" y="169" width="1" height="15" fill="#f0843c"/>
<rect x="723.0" y="176" width="3" height="3" fill="#f0843c"/>
<rect x="724.0" y="177" width="1" height="1" fill="#ffb070"/>
<rect x="728.0" y="172" width="1" height="10" fill="#f0843c"/>
<rect x="727.0" y="174" width="3" height="7" fill="#f0843c"/>
<rect x="728.0" y="175" width="1" height="5" fill="#3a404b"/>
<rect x="732.0" y="177" width="1" height="29" fill="#f0843c"/>
<rect x="731.0" y="180" width="3" height="21" fill="#f0843c"/>
<rect x="732.0" y="181" width="1" height="19" fill="#3a404b"/>
<rect x="736.0" y="163" width="1" height="42" fill="#f0843c"/>
<rect x="735.0" y="166" width="3" height="34" fill="#f0843c"/>
<rect x="736.0" y="167" width="1" height="32" fill="#ffb070"/>
<rect x="740.0" y="149" width="1" height="33" fill="#f0843c"/>
<rect x="739.0" y="152" width="3" height="13" fill="#f0843c"/>
<rect x="740.0" y="153" width="1" height="11" fill="#ffb070"/>
<rect x="745.0" y="145" width="1" height="26" fill="#f0843c"/>
<rect x="744.0" y="151" width="3" height="17" fill="#f0843c"/>
<rect x="745.0" y="152" width="1" height="15" fill="#3a404b"/>
<rect x="749.0" y="160" width="1" height="13" fill="#f0843c"/>
<rect x="748.0" y="168" width="3" height="3" fill="#f0843c"/>
<rect x="749.0" y="169" width="1" height="1" fill="#3a404b"/>
<rect x="753.0" y="157" width="1" height="15" fill="#f0843c"/>
<rect x="752.0" y="166" width="3" height="4" fill="#f0843c"/>
<rect x="753.0" y="167" width="1" height="2" fill="#ffb070"/>
<rect x="757.0" y="155" width="1" height="24" fill="#f0843c"/>
<rect x="756.0" y="158" width="3" height="7" fill="#f0843c"/>
<rect x="757.0" y="159" width="1" height="5" fill="#ffb070"/>
<rect x="761.0" y="157" width="1" height="33" fill="#f0843c"/>
<rect x="760.0" y="157" width="3" height="24" fill="#f0843c"/>
<rect x="761.0" y="158" width="1" height="22" fill="#3a404b"/>
<rect x="765.0" y="166" width="1" height="30" fill="#f0843c"/>
<rect x="764.0" y="171" width="3" height="9" fill="#f0843c"/>
<rect x="765.0" y="172" width="1" height="7" fill="#ffb070"/>
<rect x="769.0" y="139" width="1" height="66" fill="#f0843c"/>
<rect x="768.0" y="146" width="3" height="24" fill="#f0843c"/>
<rect x="769.0" y="147" width="1" height="22" fill="#ffb070"/>
<rect x="773.0" y="140" width="1" height="8" fill="#f0843c"/>
<rect x="772.0" y="144" width="3" height="2" fill="#f0843c"/>
<rect x="777.0" y="131" width="1" height="17" fill="#f0843c"/>
<rect x="776.0" y="136" width="3" height="9" fill="#f0843c"/>
<rect x="777.0" y="137" width="1" height="7" fill="#ffb070"/>
<rect x="781.0" y="114" width="1" height="28" fill="#f0843c"/>
<rect x="780.0" y="120" width="3" height="14" fill="#f0843c"/>
<rect x="781.0" y="121" width="1" height="12" fill="#ffb070"/>
<rect x="785.0" y="110" width="1" height="16" fill="#f0843c"/>
<rect x="784.0" y="113" width="3" height="6" fill="#f0843c"/>
<rect x="785.0" y="114" width="1" height="4" fill="#ffb070"/>
<rect x="789.0" y="105" width="1" height="15" fill="#f0843c"/>
<rect x="788.0" y="112" width="3" height="1" fill="#f0843c"/>
<rect x="793.0" y="103" width="1" height="14" fill="#f0843c"/>
<rect x="792.0" y="111" width="3" height="1" fill="#f0843c"/>
<rect x="797.0" y="101" width="1" height="15" fill="#f0843c"/>
<rect x="796.0" y="110" width="3" height="5" fill="#f0843c"/>
<rect x="797.0" y="111" width="1" height="3" fill="#3a404b"/>
<rect x="801.0" y="111" width="1" height="9" fill="#f0843c"/>
<rect x="800.0" y="114" width="3" height="3" fill="#f0843c"/>
<rect x="801.0" y="115" width="1" height="1" fill="#3a404b"/>
<rect x="805.0" y="91" width="1" height="30" fill="#f0843c"/>
<rect x="804.0" y="95" width="3" height="21" fill="#f0843c"/>
<rect x="805.0" y="96" width="1" height="19" fill="#ffb070"/>
<rect x="809.0" y="90" width="1" height="29" fill="#f0843c"/>
<rect x="808.0" y="94" width="3" height="23" fill="#f0843c"/>
<rect x="809.0" y="95" width="1" height="21" fill="#3a404b"/>
<rect x="813.0" y="108" width="1" height="30" fill="#f0843c"/>
<rect x="812.0" y="116" width="3" height="18" fill="#f0843c"/>
<rect x="813.0" y="117" width="1" height="16" fill="#3a404b"/>
<rect x="817.0" y="116" width="1" height="23" fill="#f0843c"/>
<rect x="816.0" y="119" width="3" height="14" fill="#f0843c"/>
<rect x="817.0" y="120" width="1" height="12" fill="#ffb070"/>
<rect x="821.0" y="120" width="1" height="11" fill="#f0843c"/>
<rect x="820.0" y="125" width="3" height="1" fill="#f0843c"/>
<rect x="825.0" y="119" width="1" height="15" fill="#f0843c"/>
<rect x="829.0" y="106" width="1" height="24" fill="#f0843c"/>
<rect x="828.0" y="112" width="3" height="12" fill="#f0843c"/>
<rect x="829.0" y="113" width="1" height="10" fill="#ffb070"/>
<rect x="833.0" y="100" width="1" height="24" fill="#f0843c"/>
<rect x="832.0" y="111" width="3" height="10" fill="#f0843c"/>
<rect x="833.0" y="112" width="1" height="8" fill="#3a404b"/>
<rect x="837.0" y="106" width="1" height="22" fill="#f0843c"/>
<rect x="836.0" y="121" width="3" height="4" fill="#f0843c"/>
<rect x="837.0" y="122" width="1" height="2" fill="#3a404b"/>
<rect x="842.0" y="117" width="1" height="12" fill="#f0843c"/>
<rect x="841.0" y="123" width="3" height="1" fill="#f0843c"/>
<rect x="846.0" y="115" width="1" height="12" fill="#f0843c"/>
<rect x="845.0" y="122" width="3" height="1" fill="#f0843c"/>
<rect x="850.0" y="111" width="1" height="16" fill="#f0843c"/>
<rect x="849.0" y="117" width="3" height="5" fill="#f0843c"/>
<rect x="850.0" y="118" width="1" height="3" fill="#ffb070"/>
<rect x="854.0" y="109" width="1" height="16" fill="#f0843c"/>
<rect x="853.0" y="112" width="3" height="4" fill="#f0843c"/>
<rect x="854.0" y="113" width="1" height="2" fill="#ffb070"/>
<rect x="858.0" y="102" width="1" height="16" fill="#f0843c"/>
<rect x="857.0" y="111" width="3" height="1" fill="#f0843c"/>
<rect x="862.0" y="107" width="1" height="32" fill="#f0843c"/>
<rect x="861.0" y="111" width="3" height="14" fill="#f0843c"/>
<rect x="862.0" y="112" width="1" height="12" fill="#3a404b"/>
<rect x="866.0" y="122" width="1" height="11" fill="#f0843c"/>
<rect x="865.0" y="126" width="3" height="2" fill="#f0843c"/>
<rect x="870.0" y="121" width="1" height="13" fill="#f0843c"/>
<rect x="869.0" y="127" width="3" height="3" fill="#f0843c"/>
<rect x="870.0" y="128" width="1" height="1" fill="#3a404b"/>
<rect x="874.0" y="117" width="1" height="15" fill="#f0843c"/>
<rect x="873.0" y="124" width="3" height="6" fill="#f0843c"/>
<rect x="874.0" y="125" width="1" height="4" fill="#ffb070"/>
<rect x="878.0" y="113" width="1" height="36" fill="#f0843c"/>
<rect x="877.0" y="122" width="3" height="17" fill="#f0843c"/>
<rect x="878.0" y="123" width="1" height="15" fill="#3a404b"/>
<rect x="882.0" y="131" width="1" height="13" fill="#f0843c"/>
<rect x="881.0" y="136" width="3" height="2" fill="#f0843c"/>
</g>
<path d="M206.0 37.0 L225.0 41.0 L246.4 50.7 L261.0 57.6 L288.0 72.0 L297.5 78.0 L307.5 81.8 L318.8 88.6 L326.2 92.4 L336.2 96.5 L351.2 100.8 L361.2 102.8 L369.4 103.6 L385.0 111.1 L399.0 119.2 L408.8 125.0 L417.5 128.5 L427.5 129.4 L432.5 131.0 L438.8 131.0 L442.5 132.8 L451.2 132.5 L456.2 130.6 L490.0 130.6 L495.0 132.9 L502.5 136.9 L510.0 141.0 L518.8 144.6 L537.5 144.6 M550.0 149.2 L560.0 150.8 L567.5 152.5 L577.5 153.1 L586.2 156.2 L592.5 158.8 L600.0 160.6 L612.5 163.1 L625.0 168.1 L640.0 172.9 L652.5 173.1 L670.0 176.5 L685.0 180.2 L695.0 182.2 L706.2 185.0 L720.0 185.0 L730.0 183.5 L745.0 181.9 L758.8 180.0 L767.5 178.1 L780.0 175.0 L795.0 166.2 L807.5 160.6 L821.6 156.2 L836.2 151.2 L851.2 148.5 L860.0 145.0 L871.0 143.9 L881.0 142.8" fill="none" stroke="#b2222c" stroke-width="1.8" stroke-linejoin="round"/>
<g opacity="0.9">
<rect x="16" y="87.8" width="870" height="2.3" fill="#b0262e"/>
<rect x="16" y="135.8" width="870" height="1.4" fill="#e4e4e4"/>
<rect x="16" y="145.8" width="870" height="1" fill="#0e7a0e"/>
<rect x="16" y="146.8" width="870" height="1.5" fill="#48d448"/>
</g>
<g fill="#a41e26" shape-rendering="crispEdges">
<rect x="16.5" y="272.0" width="2" height="1"/>
<rect x="20.5" y="272.0" width="2" height="1"/>
<rect x="24.5" y="272.0" width="2" height="1"/>
<rect x="28.5" y="272.0" width="2" height="1"/>
<rect x="32.5" y="272.0" width="2" height="1"/>
<rect x="36.5" y="272.0" width="2" height="1"/>
<rect x="40.5" y="272.5" width="2" height="4.8"/>
<rect x="44.5" y="272.5" width="2" height="8.5"/>
<rect x="48.5" y="272.5" width="2" height="10.1"/>
<rect x="52.5" y="272.5" width="2" height="11.7"/>
<rect x="56.5" y="272.5" width="2" height="12.5"/>
<rect x="61.5" y="272.5" width="2" height="13.9"/>
<rect x="65.5" y="272.5" width="2" height="13.4"/>
<rect x="69.5" y="272.5" width="2" height="11.8"/>
<rect x="73.5" y="272.5" width="2" height="10.2"/>
<rect x="77.5" y="272.5" width="2" height="8.6"/>
<rect x="81.5" y="272.5" width="2" height="7.7"/>
<rect x="85.5" y="272.5" width="2" height="6.9"/>
<rect x="89.5" y="272.5" width="2" height="6.1"/>
<rect x="93.5" y="272.5" width="2" height="4.7"/>
<rect x="97.5" y="272.5" width="2" height="2.8"/>
<rect x="101.5" y="272.5" width="2" height="1.2"/>
<rect x="105.5" y="272.0" width="2" height="1"/>
<rect x="109.5" y="270.2" width="2" height="2.3"/>
<rect x="113.5" y="269.3" width="2" height="3.2"/>
<rect x="117.5" y="267.1" width="2" height="5.4"/>
<rect x="121.5" y="266.7" width="2" height="5.8"/>
<rect x="125.5" y="266.7" width="2" height="5.8"/>
<rect x="129.5" y="265.9" width="2" height="6.6"/>
<rect x="133.5" y="265.1" width="2" height="7.4"/>
<rect x="137.5" y="264.3" width="2" height="8.2"/>
<rect x="141.5" y="264.2" width="2" height="8.3"/>
<rect x="145.5" y="264.2" width="2" height="8.3"/>
<rect x="149.5" y="264.6" width="2" height="7.9"/>
<rect x="153.5" y="264.7" width="2" height="7.8"/>
<rect x="158.5" y="265.1" width="2" height="7.4"/>
<rect x="162.5" y="265.9" width="2" height="6.6"/>
<rect x="166.5" y="266.7" width="2" height="5.8"/>
<rect x="170.5" y="267.5" width="2" height="5.0"/>
<rect x="174.5" y="268.3" width="2" height="4.2"/>
<rect x="178.5" y="268.4" width="2" height="4.1"/>
<rect x="182.5" y="269.2" width="2" height="3.3"/>
<rect x="186.5" y="270.0" width="2" height="2.5"/>
<rect x="190.5" y="270.0" width="2" height="2.5"/>
<rect x="194.5" y="270.3" width="2" height="2.2"/>
<rect x="198.5" y="270.4" width="2" height="2.1"/>
<rect x="202.5" y="270.8" width="2" height="1.7"/>
<rect x="206.5" y="271.3" width="2" height="1.2"/>
<rect x="210.5" y="271.5" width="2" height="1.0"/>
<rect x="214.5" y="271.6" width="2" height="0.9"/>
<rect x="218.5" y="272.0" width="2" height="1"/>
<rect x="222.5" y="272.0" width="2" height="1"/>
<rect x="226.5" y="272.0" width="2" height="1"/>
<rect x="230.5" y="272.5" width="2" height="1.2"/>
<rect x="234.5" y="272.5" width="2" height="1.3"/>
<rect x="238.5" y="272.5" width="2" height="1.6"/>
<rect x="242.5" y="272.5" width="2" height="1.9"/>
<rect x="246.5" y="272.5" width="2" height="2.8"/>
<rect x="250.5" y="272.5" width="2" height="3.6"/>
<rect x="255.5" y="272.5" width="2" height="3.5"/>
<rect x="259.5" y="272.5" width="2" height="3.5"/>
<rect x="263.5" y="272.5" width="2" height="3.2"/>
<rect x="267.5" y="272.5" width="2" height="2.8"/>
<rect x="271.5" y="272.5" width="2" height="2.4"/>
<rect x="275.5" y="272.5" width="2" height="1.9"/>
<rect x="279.5" y="272.5" width="2" height="3.0"/>
<rect x="283.5" y="272.5" width="2" height="3.8"/>
<rect x="287.5" y="272.5" width="2" height="4.5"/>
<rect x="291.5" y="272.5" width="2" height="3.9"/>
<rect x="295.5" y="272.5" width="2" height="3.4"/>
<rect x="299.5" y="272.5" width="2" height="3.1"/>
<rect x="303.5" y="272.5" width="2" height="2.9"/>
<rect x="307.5" y="272.5" width="2" height="2.6"/>
<rect x="311.5" y="272.5" width="2" height="2.3"/>
<rect x="315.5" y="272.5" width="2" height="2.0"/>
<rect x="319.5" y="272.5" width="2" height="1.6"/>
<rect x="323.5" y="272.5" width="2" height="1.1"/>
<rect x="327.5" y="272.0" width="2" height="1"/>
<rect x="331.5" y="272.0" width="2" height="1"/>
<rect x="335.5" y="271.4" width="2" height="1.1"/>
<rect x="339.5" y="270.7" width="2" height="1.8"/>
<rect x="343.5" y="270.1" width="2" height="2.4"/>
<rect x="347.5" y="270.0" width="2" height="2.5"/>
<rect x="352.5" y="269.8" width="2" height="2.7"/>
<rect x="356.5" y="270.0" width="2" height="2.5"/>
<rect x="360.5" y="270.5" width="2" height="2.0"/>
<rect x="364.5" y="270.5" width="2" height="2.0"/>
<rect x="368.5" y="272.0" width="2" height="1"/>
<rect x="372.5" y="272.0" width="2" height="1"/>
<rect x="376.5" y="272.5" width="2" height="1.0"/>
<rect x="380.5" y="272.5" width="2" height="1.6"/>
<rect x="384.5" y="272.5" width="2" height="2.2"/>
<rect x="388.5" y="272.5" width="2" height="2.5"/>
<rect x="392.5" y="272.5" width="2" height="2.3"/>
<rect x="396.5" y="272.5" width="2" height="2.0"/>
<rect x="400.5" y="272.5" width="2" height="2.4"/>
<rect x="404.5" y="272.5" width="2" height="3.2"/>
<rect x="408.5" y="272.5" width="2" height="4.0"/>
<rect x="412.5" y="272.5" width="2" height="3.4"/>
<rect x="416.5" y="272.5" width="2" height="0.8"/>
<rect x="420.5" y="272.0" width="2" height="1"/>
<rect x="424.5" y="271.0" width="2" height="1.5"/>
<rect x="428.5" y="270.2" width="2" height="2.3"/>
<rect x="432.5" y="269.9" width="2" height="2.6"/>
<rect x="436.5" y="269.7" width="2" height="2.8"/>
<rect x="440.5" y="269.5" width="2" height="3.0"/>
<rect x="444.5" y="269.5" width="2" height="3.0"/>
<rect x="449.5" y="268.9" width="2" height="3.6"/>
<rect x="453.5" y="268.2" width="2" height="4.3"/>
<rect x="457.5" y="268.1" width="2" height="4.4"/>
<rect x="461.5" y="268.3" width="2" height="4.2"/>
<rect x="465.5" y="268.6" width="2" height="3.9"/>
<rect x="469.5" y="269.9" width="2" height="2.6"/>
<rect x="473.5" y="270.9" width="2" height="1.6"/>
<rect x="477.5" y="271.4" width="2" height="1.1"/>
<rect x="481.5" y="272.0" width="2" height="1"/>
<rect x="485.5" y="272.0" width="2" height="1"/>
<rect x="489.5" y="272.5" width="2" height="0.9"/>
<rect x="493.5" y="272.5" width="2" height="2.0"/>
<rect x="497.5" y="272.5" width="2" height="4.6"/>
<rect x="501.5" y="272.5" width="2" height="6.4"/>
<rect x="505.5" y="272.5" width="2" height="7.6"/>
<rect x="509.5" y="272.5" width="2" height="7.3"/>
<rect x="513.5" y="272.5" width="2" height="6.5"/>
<rect x="517.5" y="272.5" width="2" height="3.6"/>
<rect x="521.5" y="272.5" width="2" height="0.9"/>
<rect x="525.5" y="272.0" width="2" height="1"/>
<rect x="529.5" y="272.0" width="2" height="1"/>
<rect x="533.5" y="272.0" width="2" height="1"/>
<rect x="537.5" y="272.0" width="2" height="1"/>
<rect x="541.5" y="272.0" width="2" height="1"/>
<rect x="546.5" y="272.0" width="2" height="1"/>
<rect x="550.5" y="272.0" width="2" height="1"/>
<rect x="554.5" y="272.0" width="2" height="1"/>
<rect x="558.5" y="272.0" width="2" height="1"/>
<rect x="562.5" y="272.0" width="2" height="1"/>
<rect x="566.5" y="272.0" width="2" height="1"/>
<rect x="570.5" y="272.0" width="2" height="1"/>
<rect x="574.5" y="272.0" width="2" height="1"/>
<rect x="578.5" y="272.0" width="2" height="1"/>
<rect x="582.5" y="272.0" width="2" height="1"/>
<rect x="586.5" y="272.5" width="2" height="1.8"/>
<rect x="590.5" y="272.5" width="2" height="2.7"/>
<rect x="594.5" y="272.5" width="2" height="2.6"/>
<rect x="598.5" y="272.5" width="2" height="2.6"/>
<rect x="602.5" y="272.5" width="2" height="2.5"/>
<rect x="606.5" y="272.5" width="2" height="2.5"/>
<rect x="610.5" y="272.5" width="2" height="2.3"/>
<rect x="614.5" y="272.5" width="2" height="1.8"/>
<rect x="618.5" y="272.5" width="2" height="1.7"/>
<rect x="622.5" y="272.5" width="2" height="1.7"/>
<rect x="626.5" y="272.5" width="2" height="1.6"/>
<rect x="630.5" y="272.5" width="2" height="1.5"/>
<rect x="634.5" y="272.5" width="2" height="0.9"/>
<rect x="638.5" y="272.0" width="2" height="1"/>
<rect x="643.5" y="272.0" width="2" height="1"/>
<rect x="647.5" y="272.0" width="2" height="1"/>
<rect x="651.5" y="272.0" width="2" height="1"/>
<rect x="655.5" y="272.0" width="2" height="1"/>
<rect x="659.5" y="272.0" width="2" height="1"/>
<rect x="663.5" y="272.0" width="2" height="1"/>
<rect x="667.5" y="272.0" width="2" height="1"/>
<rect x="671.5" y="272.0" width="2" height="1"/>
<rect x="675.5" y="272.0" width="2" height="1"/>
<rect x="679.5" y="272.0" width="2" height="1"/>
<rect x="683.5" y="272.0" width="2" height="1"/>
<rect x="687.5" y="272.0" width="2" height="1"/>
<rect x="691.5" y="272.0" width="2" height="1"/>
<rect x="695.5" y="272.0" width="2" height="1"/>
<rect x="699.5" y="272.0" width="2" height="1"/>
<rect x="703.5" y="272.0" width="2" height="1"/>
<rect x="707.5" y="272.0" width="2" height="1"/>
<rect x="711.5" y="272.0" width="2" height="1"/>
<rect x="715.5" y="271.2" width="2" height="1.3"/>
<rect x="719.5" y="270.4" width="2" height="2.1"/>
<rect x="723.5" y="270.2" width="2" height="2.3"/>
<rect x="727.5" y="270.1" width="2" height="2.4"/>
<rect x="731.5" y="270.1" width="2" height="2.4"/>
<rect x="735.5" y="270.0" width="2" height="2.5"/>
<rect x="739.5" y="269.8" width="2" height="2.7"/>
<rect x="744.5" y="270.2" width="2" height="2.3"/>
<rect x="748.5" y="270.5" width="2" height="2.0"/>
<rect x="752.5" y="271.0" width="2" height="1.5"/>
<rect x="756.5" y="271.4" width="2" height="1.1"/>
<rect x="760.5" y="271.6" width="2" height="0.9"/>
<rect x="764.5" y="271.3" width="2" height="1.2"/>
<rect x="768.5" y="271.0" width="2" height="1.5"/>
<rect x="772.5" y="270.3" width="2" height="2.2"/>
<rect x="776.5" y="269.6" width="2" height="2.9"/>
<rect x="780.5" y="269.0" width="2" height="3.5"/>
<rect x="784.5" y="268.7" width="2" height="3.8"/>
<rect x="788.5" y="268.5" width="2" height="4.0"/>
<rect x="792.5" y="269.0" width="2" height="3.5"/>
<rect x="796.5" y="269.5" width="2" height="3.0"/>
<rect x="800.5" y="269.6" width="2" height="2.9"/>
<rect x="804.5" y="269.8" width="2" height="2.7"/>
<rect x="808.5" y="270.9" width="2" height="1.6"/>
<rect x="812.5" y="272.0" width="2" height="1"/>
<rect x="816.5" y="272.0" width="2" height="1"/>
<rect x="820.5" y="272.5" width="2" height="1.5"/>
<rect x="824.5" y="272.5" width="2" height="1.9"/>
<rect x="828.5" y="272.5" width="2" height="2.2"/>
<rect x="832.5" y="272.5" width="2" height="2.3"/>
<rect x="836.5" y="272.5" width="2" height="2.7"/>
<rect x="841.5" y="272.5" width="2" height="3.0"/>
<rect x="845.5" y="272.5" width="2" height="2.7"/>
<rect x="849.5" y="272.5" width="2" height="2.3"/>
<rect x="853.5" y="272.5" width="2" height="2.2"/>
<rect x="857.5" y="272.5" width="2" height="2.3"/>
<rect x="861.5" y="272.5" width="2" height="2.5"/>
<rect x="865.5" y="272.5" width="2" height="2.6"/>
<rect x="869.5" y="272.5" width="2" height="2.9"/>
<rect x="873.5" y="272.5" width="2" height="2.8"/>
<rect x="877.5" y="272.5" width="2" height="3.1"/>
<rect x="881.5" y="272.5" width="2" height="3.5"/>
</g>
<path d="M15.0 280.8 L38.3 279.7 L40.0 282.5 L45.0 290.0 L51.7 298.3 L58.3 305.8 L65.0 312.0 L70.8 314.2 L79.2 315.3 L85.0 317.0 L90.8 318.3 L96.7 317.5 L101.7 315.8 L107.5 310.8 L115.0 304.7 L121.7 301.7 L130.0 298.7 L135.0 295.0 L141.7 290.0 L148.3 287.5 L153.3 284.2 L158.3 281.7 L165.0 280.3 L175.0 279.2 L180.0 277.0 L188.3 276.3 L196.7 275.3 L203.3 273.7 L207.0 273.7 L223.7 273.7 L237.0 275.3 L243.7 276.7 L252.0 279.7 L262.0 280.8 L277.0 281.3 L282.0 284.2 L288.7 286.7 L297.0 287.0 L322.0 287.0 L330.3 285.0 L338.7 282.5 L345.3 280.0 L355.3 278.3 L365.3 276.3 L372.0 278.3 L380.3 280.8 L388.7 282.5 L399.0 282.5 L409.0 286.7 L414.0 286.3 L420.7 281.7 L429.0 278.3 L439.0 275.8 L449.0 273.3 L457.3 268.0 L465.7 267.0 L472.3 268.3 L485.7 268.7 L492.3 269.2 L500.7 277.5 L507.3 282.0 L514.0 283.3 L522.3 279.7 L530.7 277.0 L539.0 275.8 L549.0 276.7 L582.3 277.0 L591.0 279.7 L612.7 279.7 L616.0 280.3 L631.0 280.3 L641.0 279.7 L654.3 277.0 L664.3 275.8 L691.0 276.7 L712.7 276.3 L721.0 271.7 L729.3 270.3 L737.7 269.2 L740.0 268.7 L750.0 267.0 L760.0 266.7 L770.0 265.3 L780.0 260.8 L790.0 257.5 L798.3 256.3 L806.7 255.0 L813.3 257.0 L823.3 259.7 L833.3 261.3 L843.3 263.7 L856.7 264.2 L866.7 265.8 L876.7 268.0 L881.7 270.3" fill="none" stroke="#0c0c80" stroke-width="1.2" stroke-linejoin="round"/>
<g fill="#dc1e28">
<circle cx="17.5" cy="281.0" r="1.5"/>
<circle cx="21.5" cy="280.4" r="1.5"/>
<circle cx="25.5" cy="280.0" r="1.5"/>
<circle cx="29.5" cy="279.7" r="1.5"/>
<circle cx="33.5" cy="279.7" r="1.5"/>
<circle cx="37.5" cy="279.7" r="1.5"/>
<circle cx="41.5" cy="280.5" r="1.5"/>
<circle cx="45.5" cy="282.3" r="1.5"/>
<circle cx="49.5" cy="284.4" r="1.5"/>
<circle cx="53.5" cy="286.6" r="1.5"/>
<circle cx="57.5" cy="289.4" r="1.5"/>
<circle cx="62.5" cy="293.1" r="1.5"/>
<circle cx="66.5" cy="296.6" r="1.5"/>
<circle cx="70.5" cy="299.8" r="1.5"/>
<circle cx="74.5" cy="302.9" r="1.5"/>
<circle cx="78.5" cy="305.2" r="1.5"/>
<circle cx="82.5" cy="307.4" r="1.5"/>
<circle cx="86.5" cy="309.1" r="1.5"/>
<circle cx="90.5" cy="310.5" r="1.5"/>
<circle cx="94.5" cy="311.6" r="1.5"/>
<circle cx="98.5" cy="312.6" r="1.5"/>
<circle cx="102.5" cy="313.2" r="1.5"/>
<circle cx="106.5" cy="312.7" r="1.5"/>
<circle cx="110.5" cy="311.8" r="1.5"/>
<circle cx="114.5" cy="310.5" r="1.5"/>
<circle cx="118.5" cy="308.9" r="1.5"/>
<circle cx="122.5" cy="307.7" r="1.5"/>
<circle cx="126.5" cy="306.2" r="1.5"/>
<circle cx="130.5" cy="305.0" r="1.5"/>
<circle cx="134.5" cy="303.2" r="1.5"/>
<circle cx="138.5" cy="299.8" r="1.5"/>
<circle cx="142.5" cy="297.8" r="1.5"/>
<circle cx="146.5" cy="295.9" r="1.5"/>
<circle cx="150.5" cy="294.1" r="1.5"/>
<circle cx="154.5" cy="292.3" r="1.5"/>
<circle cx="159.5" cy="289.9" r="1.5"/>
<circle cx="163.5" cy="287.8" r="1.5"/>
<circle cx="167.5" cy="285.8" r="1.5"/>
<circle cx="171.5" cy="284.4" r="1.5"/>
<circle cx="175.5" cy="283.4" r="1.5"/>
<circle cx="179.5" cy="281.6" r="1.5"/>
<circle cx="183.5" cy="280.9" r="1.5"/>
<circle cx="187.5" cy="279.9" r="1.5"/>
<circle cx="191.5" cy="278.9" r="1.5"/>
<circle cx="195.5" cy="278.4" r="1.5"/>
<circle cx="199.5" cy="277.8" r="1.5"/>
<circle cx="203.5" cy="276.8" r="1.5"/>
<circle cx="207.5" cy="275.0" r="1.5"/>
<circle cx="211.5" cy="274.8" r="1.5"/>
<circle cx="215.5" cy="274.6" r="1.5"/>
<circle cx="219.5" cy="274.2" r="1.5"/>
<circle cx="223.5" cy="273.7" r="1.5"/>
<circle cx="227.5" cy="273.5" r="1.5"/>
<circle cx="231.5" cy="273.4" r="1.5"/>
<circle cx="235.5" cy="273.7" r="1.5"/>
<circle cx="239.5" cy="274.1" r="1.5"/>
<circle cx="243.5" cy="274.5" r="1.5"/>
<circle cx="247.5" cy="274.9" r="1.5"/>
<circle cx="251.5" cy="275.5" r="1.5"/>
<circle cx="256.5" cy="276.3" r="1.5"/>
<circle cx="260.5" cy="276.8" r="1.5"/>
<circle cx="264.5" cy="277.4" r="1.5"/>
<circle cx="268.5" cy="277.9" r="1.5"/>
<circle cx="272.5" cy="278.5" r="1.5"/>
<circle cx="276.5" cy="279.2" r="1.5"/>
<circle cx="280.5" cy="280.0" r="1.5"/>
<circle cx="284.5" cy="280.8" r="1.5"/>
<circle cx="288.5" cy="281.6" r="1.5"/>
<circle cx="292.5" cy="282.4" r="1.5"/>
<circle cx="296.5" cy="283.2" r="1.5"/>
<circle cx="300.5" cy="283.5" r="1.5"/>
<circle cx="304.5" cy="283.8" r="1.5"/>
<circle cx="308.5" cy="284.1" r="1.5"/>
<circle cx="312.5" cy="284.4" r="1.5"/>
<circle cx="316.5" cy="284.8" r="1.5"/>
<circle cx="320.5" cy="285.2" r="1.5"/>
<circle cx="324.5" cy="285.2" r="1.5"/>
<circle cx="328.5" cy="285.1" r="1.5"/>
<circle cx="332.5" cy="284.8" r="1.5"/>
<circle cx="336.5" cy="284.4" r="1.5"/>
<circle cx="340.5" cy="283.8" r="1.5"/>
<circle cx="344.5" cy="283.0" r="1.5"/>
<circle cx="348.5" cy="282.3" r="1.5"/>
<circle cx="353.5" cy="281.6" r="1.5"/>
<circle cx="357.5" cy="280.6" r="1.5"/>
<circle cx="361.5" cy="279.4" r="1.5"/>
<circle cx="365.5" cy="278.6" r="1.5"/>
<circle cx="369.5" cy="278.4" r="1.5"/>
<circle cx="373.5" cy="278.5" r="1.5"/>
<circle cx="377.5" cy="278.9" r="1.5"/>
<circle cx="381.5" cy="279.2" r="1.5"/>
<circle cx="385.5" cy="279.5" r="1.5"/>
<circle cx="389.5" cy="279.7" r="1.5"/>
<circle cx="393.5" cy="280.0" r="1.5"/>
<circle cx="397.5" cy="280.2" r="1.5"/>
<circle cx="401.5" cy="280.8" r="1.5"/>
<circle cx="405.5" cy="281.6" r="1.5"/>
<circle cx="409.5" cy="282.2" r="1.5"/>
<circle cx="413.5" cy="282.6" r="1.5"/>
<circle cx="417.5" cy="283.0" r="1.5"/>
<circle cx="421.5" cy="282.2" r="1.5"/>
<circle cx="425.5" cy="281.4" r="1.5"/>
<circle cx="429.5" cy="280.7" r="1.5"/>
<circle cx="433.5" cy="280.1" r="1.5"/>
<circle cx="437.5" cy="279.3" r="1.5"/>
<circle cx="441.5" cy="278.5" r="1.5"/>
<circle cx="445.5" cy="277.6" r="1.5"/>
<circle cx="450.5" cy="276.4" r="1.5"/>
<circle cx="454.5" cy="274.6" r="1.5"/>
<circle cx="458.5" cy="272.7" r="1.5"/>
<circle cx="462.5" cy="272.0" r="1.5"/>
<circle cx="466.5" cy="271.4" r="1.5"/>
<circle cx="470.5" cy="270.8" r="1.5"/>
<circle cx="474.5" cy="270.2" r="1.5"/>
<circle cx="478.5" cy="269.7" r="1.5"/>
<circle cx="482.5" cy="269.3" r="1.5"/>
<circle cx="486.5" cy="268.7" r="1.5"/>
<circle cx="490.5" cy="268.0" r="1.5"/>
<circle cx="494.5" cy="269.1" r="1.5"/>
<circle cx="498.5" cy="270.2" r="1.5"/>
<circle cx="502.5" cy="271.6" r="1.5"/>
<circle cx="506.5" cy="273.0" r="1.5"/>
<circle cx="510.5" cy="274.5" r="1.5"/>
<circle cx="514.5" cy="275.9" r="1.5"/>
<circle cx="518.5" cy="277.3" r="1.5"/>
<circle cx="522.5" cy="278.6" r="1.5"/>
<circle cx="526.5" cy="278.1" r="1.5"/>
<circle cx="530.5" cy="277.5" r="1.5"/>
<circle cx="534.5" cy="277.0" r="1.5"/>
<circle cx="538.5" cy="276.4" r="1.5"/>
<circle cx="542.5" cy="276.3" r="1.5"/>
<circle cx="547.5" cy="276.3" r="1.5"/>
<circle cx="551.5" cy="276.4" r="1.5"/>
<circle cx="555.5" cy="276.4" r="1.5"/>
<circle cx="559.5" cy="276.4" r="1.5"/>
<circle cx="563.5" cy="276.4" r="1.5"/>
<circle cx="567.5" cy="276.5" r="1.5"/>
<circle cx="571.5" cy="276.5" r="1.5"/>
<circle cx="575.5" cy="276.5" r="1.5"/>
<circle cx="579.5" cy="276.6" r="1.5"/>
<circle cx="583.5" cy="276.6" r="1.5"/>
<circle cx="587.5" cy="276.6" r="1.5"/>
<circle cx="591.5" cy="276.7" r="1.5"/>
<circle cx="595.5" cy="276.7" r="1.5"/>
<circle cx="599.5" cy="276.8" r="1.5"/>
<circle cx="603.5" cy="276.9" r="1.5"/>
<circle cx="607.5" cy="276.9" r="1.5"/>
<circle cx="611.5" cy="277.1" r="1.5"/>
<circle cx="615.5" cy="278.2" r="1.5"/>
<circle cx="619.5" cy="278.4" r="1.5"/>
<circle cx="623.5" cy="278.5" r="1.5"/>
<circle cx="627.5" cy="278.6" r="1.5"/>
<circle cx="631.5" cy="278.6" r="1.5"/>
<circle cx="635.5" cy="279.0" r="1.5"/>
<circle cx="639.5" cy="279.5" r="1.5"/>
<circle cx="644.5" cy="279.3" r="1.5"/>
<circle cx="648.5" cy="278.7" r="1.5"/>
<circle cx="652.5" cy="277.9" r="1.5"/>
<circle cx="656.5" cy="277.2" r="1.5"/>
<circle cx="660.5" cy="276.8" r="1.5"/>
<circle cx="664.5" cy="276.3" r="1.5"/>
<circle cx="668.5" cy="276.3" r="1.5"/>
<circle cx="672.5" cy="276.3" r="1.5"/>
<circle cx="676.5" cy="276.3" r="1.5"/>
<circle cx="680.5" cy="276.3" r="1.5"/>
<circle cx="684.5" cy="276.3" r="1.5"/>
<circle cx="688.5" cy="276.3" r="1.5"/>
<circle cx="692.5" cy="276.3" r="1.5"/>
<circle cx="696.5" cy="276.3" r="1.5"/>
<circle cx="700.5" cy="276.3" r="1.5"/>
<circle cx="704.5" cy="276.3" r="1.5"/>
<circle cx="708.5" cy="276.3" r="1.5"/>
<circle cx="712.5" cy="276.3" r="1.5"/>
<circle cx="716.5" cy="275.6" r="1.5"/>
<circle cx="720.5" cy="274.3" r="1.5"/>
<circle cx="724.5" cy="273.7" r="1.5"/>
<circle cx="728.5" cy="273.1" r="1.5"/>
<circle cx="732.5" cy="272.5" r="1.5"/>
<circle cx="736.5" cy="272.1" r="1.5"/>
<circle cx="740.5" cy="271.5" r="1.5"/>
<circle cx="745.5" cy="270.3" r="1.5"/>
<circle cx="749.5" cy="269.3" r="1.5"/>
<circle cx="753.5" cy="268.6" r="1.5"/>
<circle cx="757.5" cy="267.9" r="1.5"/>
<circle cx="761.5" cy="267.4" r="1.5"/>
<circle cx="765.5" cy="267.2" r="1.5"/>
<circle cx="769.5" cy="267.0" r="1.5"/>
<circle cx="773.5" cy="266.2" r="1.5"/>
<circle cx="777.5" cy="265.2" r="1.5"/>
<circle cx="781.5" cy="264.2" r="1.5"/>
<circle cx="785.5" cy="263.2" r="1.5"/>
<circle cx="789.5" cy="262.2" r="1.5"/>
<circle cx="793.5" cy="260.9" r="1.5"/>
<circle cx="797.5" cy="259.8" r="1.5"/>
<circle cx="801.5" cy="259.0" r="1.5"/>
<circle cx="805.5" cy="258.2" r="1.5"/>
<circle cx="809.5" cy="257.6" r="1.5"/>
<circle cx="813.5" cy="257.0" r="1.5"/>
<circle cx="817.5" cy="257.2" r="1.5"/>
<circle cx="821.5" cy="257.5" r="1.5"/>
<circle cx="825.5" cy="257.9" r="1.5"/>
<circle cx="829.5" cy="258.3" r="1.5"/>
<circle cx="833.5" cy="258.8" r="1.5"/>
<circle cx="837.5" cy="259.3" r="1.5"/>
<circle cx="842.5" cy="260.1" r="1.5"/>
<circle cx="846.5" cy="260.8" r="1.5"/>
<circle cx="850.5" cy="261.4" r="1.5"/>
<circle cx="854.5" cy="261.6" r="1.5"/>
<circle cx="858.5" cy="261.9" r="1.5"/>
<circle cx="862.5" cy="262.3" r="1.5"/>
<circle cx="866.5" cy="262.9" r="1.5"/>
<circle cx="870.5" cy="263.5" r="1.5"/>
<circle cx="874.5" cy="264.5" r="1.5"/>
<circle cx="878.5" cy="265.5" r="1.5"/>
<circle cx="882.5" cy="266.5" r="1.5"/>
</g>
<rect x="32.5" y="330.2" width="849.5" height="1.8" fill="#1515a4"/>
<rect x="16" y="377.9" width="806" height="2.0" fill="#1515a4"/>
<path d="M15.0 360.3 L20.8 361.7 L25.0 358.3 L30.0 358.3 L33.3 363.0 L36.7 364.2" fill="none" stroke="#ea8528" stroke-width="1.05" stroke-linejoin="round"/>
<path d="M36.7 364.2 L38.3 368.3 L39.7 375.0 L45.0 388.3 L53.3 395.0 L62.5 397.0 L71.7 395.8 L85.0 393.3 L90.0 394.2 L95.0 387.0 L98.3 388.3" fill="none" stroke="#28d028" stroke-width="1.05" stroke-linejoin="round"/>
<path d="M98.3 388.3 L101.7 376.7 L105.8 377.5 L110.8 367.5 L115.0 367.5 L119.2 370.3 L125.0 371.7 L130.0 373.3 L135.0 357.5 L138.3 355.3 L141.7 357.5 L146.7 362.5 L154.2 351.3 L163.3 359.7 L167.5 357.0 L171.7 359.2 L175.0 359.2 L179.2 349.7 L184.2 358.3 L191.7 357.5 L196.7 353.7 L200.0 352.5 L203.3 347.5 L206.7 354.2 L207.0 355.3 L212.0 352.5 L215.3 355.0 L219.5 360.8 L223.7 353.3 L227.8 360.3 L232.0 359.2 L237.8 359.2 L242.0 363.0 L247.0 366.7 L251.2 373.0 L257.0 365.0 L260.3 366.3 L264.5 364.2 L268.7 364.2 L272.8 368.7 L275.7 370.0" fill="none" stroke="#ea8528" stroke-width="1.05" stroke-linejoin="round"/>
<path d="M275.7 370.0 L280.3 378.7 L282.0 378.0" fill="none" stroke="#28d028" stroke-width="1.05" stroke-linejoin="round"/>
<path d="M282.0 378.0 L285.3 374.7 L288.7 376.7 L292.8 377.7 L297.0 375.0 L300.3 360.3 L305.3 369.2 L310.3 369.2 L313.7 370.3 L317.0 370.3 L321.2 374.7 L325.3 365.8 L328.7 364.7 L332.8 354.2 L336.2 359.2 L340.3 360.8 L345.3 355.0 L349.5 357.5 L353.7 354.7 L357.8 356.7 L361.2 358.3 L365.3 352.0 L369.5 363.7 L373.7 367.5 L377.8 373.3 L382.0 368.7 L386.2 368.7 L390.3 366.7 L395.3 368.0 L398.7 370.8 L399.0 372.5 L405.7 377.0 L409.8 377.0 L414.0 372.5 L417.3 358.3 L421.5 348.7 L425.7 351.3 L429.8 350.3 L434.0 354.2 L438.2 358.0 L441.5 356.3 L445.7 343.3 L450.7 343.0 L454.8 339.2 L458.2 341.7 L462.3 346.3 L466.5 344.2 L470.7 353.7 L475.7 350.8 L479.0 350.0 L483.2 346.7 L487.3 350.0 L490.7 357.5 L494.8 373.3 L498.2 370.3 L503.2 377.5 L506.5 377.5 L510.7 373.3 L514.8 373.3 L518.2 358.3 L522.3 353.3 L526.5 350.8 L530.7 353.0 L534.8 353.3 L538.2 347.5 L542.3 362.5 L546.5 363.7 L551.5 358.3 L555.7 360.3 L559.0 360.3 L563.2 356.3 L567.3 362.0 L571.5 359.2 L575.7 360.8 L582.3 360.3 L587.3 370.8 L590.7 365.8 L591.0 365.8 L595.2 359.2 L599.3 359.2 L606.8 363.3 L611.0 363.3 L615.7 369.7 L621.8 364.7 L626.0 364.7 L631.0 368.7 L635.2 363.7 L639.3 368.3 L644.3 355.0 L648.5 354.7 L652.7 357.0 L656.8 352.5 L664.3 352.5 L668.5 367.5 L672.7 363.7 L676.8 359.2 L681.0 364.7 L688.5 358.7 L692.7 362.5 L696.8 358.3 L701.0 363.7 L706.8 355.3 L712.7 354.7 L716.3 342.5 L720.2 347.0 L724.3 345.3 L727.7 347.5 L732.7 359.7 L736.0 345.8 L740.0 340.8 L745.0 346.7 L749.2 348.3 L756.7 344.7 L761.3 355.3 L765.0 349.2 L769.2 342.5 L773.3 343.0 L777.5 339.2 L782.5 334.7 L789.2 334.2 L793.3 333.0 L797.5 334.7 L801.7 337.0" fill="none" stroke="#ea8528" stroke-width="1.05" stroke-linejoin="round"/>
<path d="M801.7 337.0 L805.3 330.3" fill="none" stroke="#d030d0" stroke-width="1.05" stroke-linejoin="round"/>
<path d="M805.3 330.3 L806.7 332.5 L810.0 342.5 L813.3 350.3 L817.5 345.3 L821.7 348.3 L825.8 347.0 L830.0 343.3 L834.2 347.0 L838.3 349.2 L845.8 348.3 L851.7 344.7 L857.5 343.3 L862.5 352.0 L865.8 353.3 L870.0 355.0 L874.2 350.3 L878.3 359.2 L881.7 357.5" fill="none" stroke="#ea8528" stroke-width="1.05" stroke-linejoin="round"/>
<g stroke="#a9bccb" stroke-width="1" fill="none" shape-rendering="crispEdges">
<rect x="15.5" y="37.5" width="871" height="209"/>
<rect x="15.5" y="252.5" width="871" height="69"/>
<rect x="15.5" y="327.5" width="871" height="72"/>
<path d="M886 58.5 H890"/>
<path d="M886 99.5 H890"/>
<path d="M886 182.5 H890"/>
<path d="M886 223.5 H890"/>
<path d="M886 272.5 H890"/>
<path d="M886 306.5 H890"/>
<path d="M886 354.5 H890"/>
<path d="M21.5 399 V403"/>
<path d="M45.5 399 V403"/>
<path d="M70.5 399 V403"/>
<path d="M94.5 399 V403"/>
<path d="M118.5 399 V403"/>
<path d="M142.5 399 V403"/>
<path d="M167.5 399 V403"/>
<path d="M191.5 399 V403"/>
<path d="M215.5 399 V403"/>
<path d="M239.5 399 V403"/>
<path d="M264.5 399 V403"/>
<path d="M288.5 399 V403"/>
<path d="M312.5 399 V403"/>
<path d="M336.5 399 V403"/>
<path d="M361.5 399 V403"/>
<path d="M385.5 399 V403"/>
<path d="M409.5 399 V403"/>
<path d="M433.5 399 V403"/>
<path d="M458.5 399 V403"/>
<path d="M482.5 399 V403"/>
<path d="M506.5 399 V403"/>
<path d="M530.5 399 V403"/>
<path d="M555.5 399 V403"/>
<path d="M579.5 399 V403"/>
<path d="M603.5 399 V403"/>
<path d="M627.5 399 V403"/>
<path d="M652.5 399 V403"/>
<path d="M676.5 399 V403"/>
<path d="M700.5 399 V403"/>
<path d="M724.5 399 V403"/>
<path d="M749.5 399 V403"/>
<path d="M773.5 399 V403"/>
<path d="M797.5 399 V403"/>
<path d="M821.5 399 V403"/>
<path d="M846.5 399 V403"/>
<path d="M870.5 399 V403"/>
</g>
<text x="894" y="65.2" font-size="11" fill="#fff" text-anchor="start" textLength="32.5" lengthAdjust="spacingAndGlyphs" >1.1950</text>
<text x="894" y="106.2" font-size="11" fill="#fff" text-anchor="start" textLength="32.5" lengthAdjust="spacingAndGlyphs" >1.1900</text>
<text x="894" y="189.2" font-size="11" fill="#fff" text-anchor="start" textLength="32.5" lengthAdjust="spacingAndGlyphs" >1.1800</text>
<text x="894" y="230.2" font-size="11" fill="#fff" text-anchor="start" textLength="32.5" lengthAdjust="spacingAndGlyphs" >1.1750</text>
<text x="895" y="278.6" font-size="11" fill="#fff" text-anchor="start" textLength="33" lengthAdjust="spacingAndGlyphs" >+0.000</text>
<text x="895" y="312.6" font-size="11" fill="#fff" text-anchor="start" textLength="29.3" lengthAdjust="spacingAndGlyphs" >-0.005</text>
<text x="894" y="360.6" font-size="11" fill="#fff" text-anchor="start" textLength="11.5" lengthAdjust="spacingAndGlyphs" >50</text>
<rect x="886" y="125.7" width="48" height="21.1" fill="#ffffff"/>
<text x="895.2" y="139.9" font-size="11" fill="#34343e" text-anchor="start" textLength="32.3" lengthAdjust="spacingAndGlyphs" >1.1855</text>
<text x="14.85" y="421.8" font-size="11" fill="#fff" text-anchor="start" textLength="11.3" lengthAdjust="spacingAndGlyphs" >16</text>
<text x="38.85" y="421.8" font-size="11" fill="#fff" text-anchor="start" textLength="11.3" lengthAdjust="spacingAndGlyphs" >17</text>
<text x="63.85" y="421.8" font-size="11" fill="#fff" text-anchor="start" textLength="11.3" lengthAdjust="spacingAndGlyphs" >18</text>
<text x="87.85" y="421.8" font-size="11" fill="#fff" text-anchor="start" textLength="11.3" lengthAdjust="spacingAndGlyphs" >21</text>
<text x="111.85" y="421.8" font-size="11" fill="#fff" text-anchor="start" textLength="11.3" lengthAdjust="spacingAndGlyphs" >22</text>
<text x="135.85" y="421.8" font-size="11" fill="#fff" text-anchor="start" textLength="11.3" lengthAdjust="spacingAndGlyphs" >23</text>
<text x="160.85" y="421.8" font-size="11" fill="#fff" text-anchor="start" textLength="11.3" lengthAdjust="spacingAndGlyphs" >24</text>
<text x="184.85" y="421.8" font-size="11" fill="#fff" text-anchor="start" textLength="11.3" lengthAdjust="spacingAndGlyphs" >25</text>
<text x="208.85" y="421.8" font-size="11" fill="#fff" text-anchor="start" textLength="11.3" lengthAdjust="spacingAndGlyphs" >28</text>
<text x="232.85" y="421.8" font-size="11" fill="#fff" text-anchor="start" textLength="11.3" lengthAdjust="spacingAndGlyphs" >29</text>
<text x="257.85" y="421.8" font-size="11" fill="#fff" text-anchor="start" textLength="11.3" lengthAdjust="spacingAndGlyphs" >30</text>
<text x="284.8" y="421.8" font-size="11" fill="#fff" text-anchor="start" textLength="5.4" lengthAdjust="spacingAndGlyphs" >1</text>
<text x="308.8" y="421.8" font-size="11" fill="#fff" text-anchor="start" textLength="5.4" lengthAdjust="spacingAndGlyphs" >2</text>
<text x="332.8" y="421.8" font-size="11" fill="#fff" text-anchor="start" textLength="5.4" lengthAdjust="spacingAndGlyphs" >5</text>
<text x="357.8" y="421.8" font-size="11" fill="#fff" text-anchor="start" textLength="5.4" lengthAdjust="spacingAndGlyphs" >6</text>
<text x="381.8" y="421.8" font-size="11" fill="#fff" text-anchor="start" textLength="5.4" lengthAdjust="spacingAndGlyphs" >7</text>
<text x="405.8" y="421.8" font-size="11" fill="#fff" text-anchor="start" textLength="5.4" lengthAdjust="spacingAndGlyphs" >8</text>
<text x="429.8" y="421.8" font-size="11" fill="#fff" text-anchor="start" textLength="5.4" lengthAdjust="spacingAndGlyphs" >9</text>
<text x="451.85" y="421.8" font-size="11" fill="#fff" text-anchor="start" textLength="11.3" lengthAdjust="spacingAndGlyphs" >12</text>
<text x="475.85" y="421.8" font-size="11" fill="#fff" text-anchor="start" textLength="11.3" lengthAdjust="spacingAndGlyphs" >13</text>
<text x="499.85" y="421.8" font-size="11" fill="#fff" text-anchor="start" textLength="11.3" lengthAdjust="spacingAndGlyphs" >14</text>
<text x="523.85" y="421.8" font-size="11" fill="#fff" text-anchor="start" textLength="11.3" lengthAdjust="spacingAndGlyphs" >15</text>
<text x="548.85" y="421.8" font-size="11" fill="#fff" text-anchor="start" textLength="11.3" lengthAdjust="spacingAndGlyphs" >16</text>
<text x="572.85" y="421.8" font-size="11" fill="#fff" text-anchor="start" textLength="11.3" lengthAdjust="spacingAndGlyphs" >19</text>
<text x="596.85" y="421.8" font-size="11" fill="#fff" text-anchor="start" textLength="11.3" lengthAdjust="spacingAndGlyphs" >20</text>
<text x="620.85" y="421.8" font-size="11" fill="#fff" text-anchor="start" textLength="11.3" lengthAdjust="spacingAndGlyphs" >21</text>
<text x="645.85" y="421.8" font-size="11" fill="#fff" text-anchor="start" textLength="11.3" lengthAdjust="spacingAndGlyphs" >22</text>
<text x="669.85" y="421.8" font-size="11" fill="#fff" text-anchor="start" textLength="11.3" lengthAdjust="spacingAndGlyphs" >23</text>
<text x="693.85" y="421.8" font-size="11" fill="#fff" text-anchor="start" textLength="11.3" lengthAdjust="spacingAndGlyphs" >26</text>
<text x="717.85" y="421.8" font-size="11" fill="#fff" text-anchor="start" textLength="11.3" lengthAdjust="spacingAndGlyphs" >27</text>
<text x="742.85" y="421.8" font-size="11" fill="#fff" text-anchor="start" textLength="11.3" lengthAdjust="spacingAndGlyphs" >28</text>
<text x="766.85" y="421.8" font-size="11" fill="#fff" text-anchor="start" textLength="11.3" lengthAdjust="spacingAndGlyphs" >29</text>
<text x="790.85" y="421.8" font-size="11" fill="#fff" text-anchor="start" textLength="11.3" lengthAdjust="spacingAndGlyphs" >30</text>
<text x="817.8" y="421.8" font-size="11" fill="#fff" text-anchor="start" textLength="5.4" lengthAdjust="spacingAndGlyphs" >2</text>
<text x="842.8" y="421.8" font-size="11" fill="#fff" text-anchor="start" textLength="5.4" lengthAdjust="spacingAndGlyphs" >3</text>
<text x="866.8" y="421.8" font-size="11" fill="#fff" text-anchor="start" textLength="5.4" lengthAdjust="spacingAndGlyphs" >4</text>
<rect x="15.5" y="376.5" width="70" height="19" rx="2.5" fill="url(#lab)" stroke="#a9c3d2" stroke-width="1"/><rect x="15" y="376" width="2.2" height="27" fill="#d4ebe6"/><text x="23.5" y="389.8" font-size="11" fill="#fff" text-anchor="start" textLength="55.5" lengthAdjust="spacingAndGlyphs" >Июнь 2021</text>
<rect x="288.5" y="376.5" width="69.4" height="19" rx="2.5" fill="url(#lab)" stroke="#a9c3d2" stroke-width="1"/><rect x="288" y="376" width="2.2" height="27" fill="#d4ebe6"/><text x="296.5" y="389.8" font-size="11" fill="#fff" text-anchor="start" textLength="54.7" lengthAdjust="spacingAndGlyphs" >Июль 2021</text>
<rect x="821.5" y="376.5" width="60.5" height="19" rx="2.5" fill="url(#lab)" stroke="#a9c3d2" stroke-width="1"/><rect x="821" y="376" width="2.2" height="27" fill="#d4ebe6"/><text x="829.5" y="389.8" font-size="11" fill="#fff" text-anchor="start" textLength="44" lengthAdjust="spacingAndGlyphs" >Авг 2021</text>
<rect x="16" y="38" width="275" height="13" fill="#3a404b"/>
<text x="17.5" y="49" font-size="11" fill="#e01818" text-anchor="start" textLength="133.5" lengthAdjust="spacingAndGlyphs" >Exponential_Moving_Average</text>
<text x="155.6" y="49" font-size="11" fill="#0a0ae0" text-anchor="start" textLength="133.5" lengthAdjust="spacingAndGlyphs" >Exponential_Moving_Average</text>
<path d="M90.2 36.0 L90.4 37.0 L91.7 41.2 L95.0 47.8 L98.3 53.7 L103.3 58.7 L106.7 62.4 L111.7 64.9 L118.3 68.5 L125.0 72.8 L131.7 77.4 L134.6 76.6 L141.0 74.9 L150.8 75.1 L158.2 73.0 L167.0 74.5 L175.8 74.5 L179.5 73.2 L197.0 73.0 L203.2 70.1 L215.8 69.8 L220.8 70.5 L229.5 71.0 L235.8 73.2 L247.0 76.4 L252.0 80.8 L255.0 83.0 L260.0 83.6 L271.2 88.0 L275.0 90.5 L280.0 96.8 L288.0 104.2 L297.5 110.8 L305.0 114.2 L312.5 119.2 L321.2 125.2 L328.8 128.0 L332.5 127.4 L337.5 128.6 L370.0 129.0 L377.5 135.0 L385.0 140.0 L397.5 146.2 L405.0 153.8 L413.8 159.0 L417.5 158.8 L421.2 156.9 L430.0 154.8 L441.2 155.0 L445.0 153.1 L455.0 145.6 L465.0 140.6 L473.8 140.0 L482.5 137.5 L488.8 137.2 L492.5 140.3 L500.0 147.2 L507.5 156.2 L515.0 162.6 L522.5 161.1 L530.0 160.6 L537.5 158.3 L545.0 160.6 L555.0 163.1 L565.0 165.0 L573.8 166.5 L582.5 169.4 L592.5 174.4 L600.0 176.5 L607.5 177.8 L616.2 182.8 L625.0 185.6 L637.5 190.2 L650.0 190.2 L662.5 188.5 L670.0 191.5 L680.0 194.0 L690.0 195.0 L700.0 198.1 L712.5 198.1 L720.0 193.1 L727.5 190.2 L732.5 191.9 L738.8 188.1 L744.0 184.8 L758.8 178.8 L766.2 178.1 L777.5 170.0 L787.5 158.8 L797.5 148.8 L801.1 146.7 L806.7 140.6 L813.3 137.8 L822.2 135.0 L831.1 131.3 L840.0 130.6 L851.1 128.3 L857.8 125.0 L866.7 125.0 L871.1 126.4 L880.0 127.2 L881.7 128.3" fill="none" stroke="#0e0ec4" stroke-width="1.35" stroke-linejoin="round"/>
<rect x="16" y="253" width="32" height="12" fill="#3a404b"/><rect x="16" y="328" width="17" height="12" fill="#3a404b"/>
<text x="17.5" y="264" font-size="11" fill="#1a1a9a" text-anchor="start" textLength="28.6" lengthAdjust="spacingAndGlyphs" >MACD</text>
<text x="17.5" y="338.5" font-size="11" fill="#f08a28" text-anchor="start" textLength="15" lengthAdjust="spacingAndGlyphs" >RSI</text>
<rect x="52.5" y="35.8" width="3" height="2.4" fill="#b8202a"/><rect x="197.6" y="35.8" width="9" height="2.4" fill="#b8202a"/>
<rect x="15" y="37" width="31" height="22" fill="#f2f2f2"/><rect x="15" y="37" width="31" height="5" fill="#c9c9c9"/>
<rect x="19.5" y="45.5" width="9" height="9" rx="1.5" fill="#e8383c" stroke="#a82226" stroke-width="1"/>
<rect x="32.5" y="45.5" width="9" height="9" rx="1.5" fill="#2b9be0" stroke="#1c6fb0" stroke-width="1"/>
</svg>
</body></html>
